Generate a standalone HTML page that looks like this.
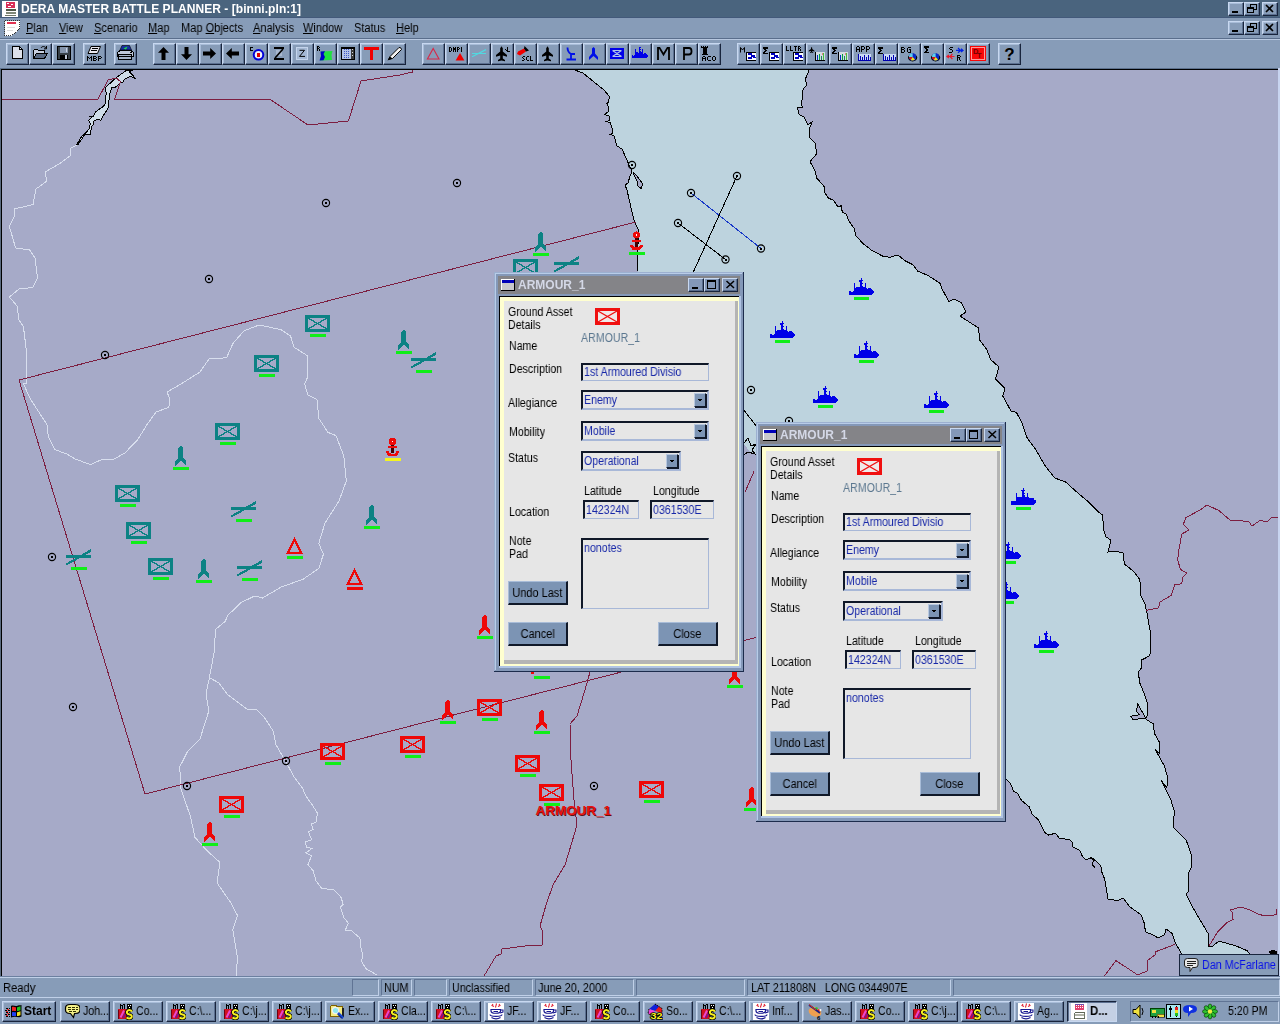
<!DOCTYPE html><html><head><meta charset="utf-8"><title>DERA MASTER BATTLE PLANNER</title><style>
html,body{margin:0;padding:0}
body{width:1280px;height:1024px;overflow:hidden;position:relative;background:#879cb8;font-family:"Liberation Sans",sans-serif;font-size:12px;color:#000}
div{box-sizing:border-box}
.rb{background:#879cb8;border:1px solid;border-color:#c8d8f0 #18243c #18243c #c8d8f0;box-shadow:inset -1px -1px 0 #5c7090,inset 1px 1px 0 #a8bcd8}
.rb2{background:#8498b8;border:1px solid;border-color:#c8d8f0 #18243c #18243c #c8d8f0;box-shadow:inset -1px -1px 0 #586c8c}
.pb{border:1px solid;border-color:#18243c #c8d8f0 #c8d8f0 #18243c;box-shadow:inset 1px 1px 0 #5c7090}
.sk{border:1px solid;border-color:#607494 #c0d0e8 #c0d0e8 #607494}
.fld{background:#e6e6e6;border:2px solid;border-color:#101828 #a8b8d8 #a8b8d8 #101828;border-right-width:1px;border-bottom-width:1px;overflow:hidden}
.cmb{background:#e6e6e6;border:2px solid;border-color:#101828 #a8b8d8 #a8b8d8 #101828;overflow:hidden}
.cb{background:#7c94b4;border:1px solid;border-color:#b8c8e0 #101828 #101828 #b8c8e0;box-shadow:1px 1px 0 #101828}
.pbn{background:#7c94b4;border:1px solid;border-color:#a8bcd8 #101828 #101828 #a8bcd8;border-bottom-width:2px;border-right-width:2px}
</style></head><body><svg width="1280" height="1024" viewBox="0 0 1280 1024" style="position:absolute;left:0;top:0" shape-rendering="crispEdges"><defs><g id="box"><rect x="1.5" y="1.5" width="22" height="14" fill="none" stroke="currentColor" stroke-width="3"/><path d="M3 3L22 14M22 3L3 14" stroke="currentColor" stroke-width="1.4" fill="none"/></g><g id="rkt"><path d="M0 0L2.5 2.5V12.5L5.5 15.5V20.5L0 15L-5.5 20.5V15.5L-2.5 12.5V2.5Z" fill="currentColor"/></g><g id="xl"><rect x="0" y="6" width="25" height="3" fill="currentColor"/><path d="M0 14.5L25 0V3L0.6 16.5Z" fill="currentColor"/></g><g id="ship"><path d="M0 -4L1 -4L2 -3L5 -4V-12H6V-7L7 -8H9L10 -7L11.5 -9L11 -12L10 -15H12V-17H13V-15L14 -14H13V-12L14 -11H13L14 -8H16V-12H17V-8L18 -6L19 -7H22L23 -5L25 -4V-2.5L23 0H0Z" fill="currentColor"/></g><g id="tri"><path d="M0 1.5L6.5 14.5H-6.5Z" fill="none" stroke="currentColor" stroke-width="2"/></g><g id="anc"><circle cx="0" cy="4" r="3.600" fill="currentColor"/><rect x="-0.800" y="3.200" width="1.600" height="1.600" fill="#fff"/><rect x="-1.500" y="7.300" width="3" height="8.500" fill="#400"/><rect x="-4.500" y="8.500" width="9" height="2.400" fill="currentColor"/><path d="M-6.500 13.500V15L-4 18.500H4L6.500 15V13.500H3.500V15L2 16H-2L-3.500 15V13.500Z" fill="currentColor"/></g></defs><rect x="0" y="68" width="1280" height="910" fill="#a6aac8"/><g shape-rendering="crispEdges"><polygon points="572.0,69.0 583.0,73.0 594.0,82.0 604.0,90.0 610.0,97.0 608.3,100.0 609.0,102.7 606.5,103.2 608.0,106.0 608.0,112.0 604.5,114.5 609.0,116.0 609.5,120.5 606.5,121.5 610.5,123.0 612.0,128.0 613.0,133.0 610.5,134.5 614.0,136.0 617.0,146.0 622.0,149.0 626.0,158.0 631.0,169.0 632.0,172.0 630.0,176.0 628.0,183.0 625.0,185.0 627.0,190.0 629.0,199.0 632.0,212.0 634.5,222.0 638.0,229.0 639.0,236.0 637.0,253.0 637.0,262.0 638.0,271.0 645.0,290.0 660.0,320.0 690.0,365.0 720.0,410.0 744.0,444.0 750.0,452.0 757.0,455.0 800.0,520.0 850.0,600.0 920.0,690.0 980.0,755.0 1005.8,778.8 1010.5,783.4 1013.4,791.0 1017.5,793.4 1021.6,800.4 1029.3,806.9 1032.2,814.5 1038.6,819.8 1045.0,832.7 1048.6,835.0 1055.6,833.2 1059.0,838.0 1069.7,839.7 1072.6,842.6 1072.6,846.7 1079.7,850.2 1082.0,855.5 1086.0,860.2 1091.4,857.3 1095.5,860.8 1100.7,865.5 1102.0,872.5 1104.8,879.5 1105.6,885.0 1108.0,899.0 1117.5,900.6 1123.0,898.0 1130.0,907.0 1141.0,914.7 1144.0,922.5 1145.6,932.0 1153.4,935.0 1158.0,938.0 1164.4,935.0 1166.0,928.8 1172.0,933.4 1175.3,942.8 1181.5,953.8 1184.0,960.0 1250.0,960.0 1250.0,954.0 1247.0,950.6 1236.0,946.0 1219.0,941.0 1212.8,946.0 1208.8,946.0 1209.0,935.0 1203.4,925.6 1192.5,907.0 1186.0,894.0 1188.8,891.0 1188.8,872.5 1192.0,866.0 1191.0,853.8 1186.0,839.7 1173.0,827.0 1174.4,811.5 1170.6,799.0 1161.0,780.0 1166.9,788.0 1167.5,777.0 1164.4,766.0 1155.0,749.0 1159.7,753.8 1159.7,742.8 1154.4,733.4 1153.4,724.0 1145.0,718.5 1133.0,719.4 1130.6,716.3 1139.4,714.7 1136.3,711.5 1137.8,703.8 1145.6,718.0 1147.0,716.0 1148.0,705.0 1144.0,693.0 1139.4,682.0 1138.5,671.5 1141.6,668.0 1142.0,659.8 1149.8,655.7 1151.0,646.0 1150.4,632.4 1147.0,613.3 1145.0,603.7 1140.0,594.0 1140.8,586.0 1139.5,579.0 1134.0,571.7 1124.4,564.0 1123.0,553.0 1114.8,551.0 1108.0,552.0 1111.0,540.0 1106.0,537.0 1104.0,531.0 1102.5,515.0 1098.4,512.0 1087.5,501.0 1079.0,494.0 1065.6,482.0 1054.7,478.0 1045.0,465.6 1035.5,449.0 1027.3,438.3 1021.9,423.0 1016.4,412.3 1011.0,411.0 1002.7,396.0 1005.0,388.7 995.5,379.0 999.0,367.0 990.6,359.6 987.0,350.0 979.7,340.0 978.5,328.0 960.0,316.0 966.0,312.0 961.5,302.7 954.0,299.0 949.0,301.5 942.0,289.0 939.8,283.0 928.0,275.5 917.5,271.0 913.0,264.8 904.6,260.5 898.0,255.0 889.5,257.3 883.0,256.2 872.3,250.8 862.7,243.3 856.0,235.8 854.0,228.3 848.7,220.8 846.6,214.3 842.3,212.2 841.2,205.7 838.0,207.0 833.7,200.4 828.3,198.0 825.0,193.0 824.0,186.4 816.5,177.8 815.4,171.4 810.0,161.7 816.5,154.0 815.4,143.5 810.0,138.0 809.6,128.4 812.0,122.0 808.0,125.0 803.6,116.6 799.3,114.5 797.2,107.6 802.5,108.0 801.5,104.8 803.2,88.7 806.2,85.5 805.8,78.0 809.6,69.0" fill="#bdd3de"/><polyline points="572.0,69.0 583.0,73.0 594.0,82.0 604.0,90.0 610.0,97.0 608.3,100.0 609.0,102.7 606.5,103.2 608.0,106.0 608.0,112.0 604.5,114.5 609.0,116.0 609.5,120.5 606.5,121.5 610.5,123.0 612.0,128.0 613.0,133.0 610.5,134.5 614.0,136.0 617.0,146.0 622.0,149.0 626.0,158.0 631.0,169.0 632.0,172.0 630.0,176.0 628.0,183.0 625.0,185.0 627.0,190.0 629.0,199.0 632.0,212.0 634.5,222.0 638.0,229.0 639.0,236.0 637.0,253.0 637.0,262.0 638.0,271.0" fill="none" stroke="#000" stroke-width="1"/><polyline points="1005.8,778.8 1010.5,783.4 1013.4,791.0 1017.5,793.4 1021.6,800.4 1029.3,806.9 1032.2,814.5 1038.6,819.8 1045.0,832.7 1048.6,835.0 1055.6,833.2 1059.0,838.0 1069.7,839.7 1072.6,842.6 1072.6,846.7 1079.7,850.2 1082.0,855.5 1086.0,860.2 1091.4,857.3 1095.5,860.8 1100.7,865.5 1102.0,872.5 1104.8,879.5 1105.6,885.0 1108.0,899.0 1117.5,900.6 1123.0,898.0 1130.0,907.0 1141.0,914.7 1144.0,922.5 1145.6,932.0 1153.4,935.0 1158.0,938.0 1164.4,935.0 1166.0,928.8 1172.0,933.4 1175.3,942.8 1181.5,953.8 1184.0,960.0" fill="none" stroke="#000" stroke-width="1"/><polyline points="809.6,69.0 805.8,78.0 806.2,85.5 803.2,88.7 801.5,104.8 802.5,108.0 797.2,107.6 799.3,114.5 803.6,116.6 808.0,125.0 812.0,122.0 809.6,128.4 810.0,138.0 815.4,143.5 816.5,154.0 810.0,161.7 815.4,171.4 816.5,177.8 824.0,186.4 825.0,193.0 828.3,198.0 833.7,200.4 838.0,207.0 841.2,205.7 842.3,212.2 846.6,214.3 848.7,220.8 854.0,228.3 856.0,235.8 862.7,243.3 872.3,250.8 883.0,256.2 889.5,257.3 898.0,255.0 904.6,260.5 913.0,264.8 917.5,271.0 928.0,275.5 939.8,283.0 942.0,289.0 949.0,301.5 954.0,299.0 961.5,302.7 966.0,312.0 960.0,316.0 978.5,328.0 979.7,340.0 987.0,350.0 990.6,359.6 999.0,367.0 995.5,379.0 1005.0,388.7 1002.7,396.0 1011.0,411.0 1016.4,412.3 1021.9,423.0 1027.3,438.3 1035.5,449.0 1045.0,465.6 1054.7,478.0 1065.6,482.0 1079.0,494.0 1087.5,501.0 1098.4,512.0 1102.5,515.0 1104.0,531.0 1106.0,537.0 1111.0,540.0 1108.0,552.0 1114.8,551.0 1123.0,553.0 1124.4,564.0 1134.0,571.7 1139.5,579.0 1140.8,586.0 1140.0,594.0 1145.0,603.7 1147.0,613.3 1150.4,632.4 1151.0,646.0 1149.8,655.7 1142.0,659.8 1141.6,668.0 1138.5,671.5 1139.4,682.0 1144.0,693.0 1148.0,705.0 1147.0,716.0 1145.6,718.0 1137.8,703.8 1136.3,711.5 1139.4,714.7 1130.6,716.3 1133.0,719.4 1145.0,718.5 1153.4,724.0 1154.4,733.4 1159.7,742.8 1159.7,753.8 1155.0,749.0 1164.4,766.0 1167.5,777.0 1166.9,788.0 1161.0,780.0 1170.6,799.0 1174.4,811.5 1173.0,827.0 1186.0,839.7 1191.0,853.8 1192.0,866.0 1188.8,872.5 1188.8,891.0 1186.0,894.0 1192.5,907.0 1203.4,925.6 1209.0,935.0 1208.8,946.0 1212.8,946.0 1219.0,941.0 1236.0,946.0 1247.0,950.6 1250.0,954.0 1250.0,960.0" fill="none" stroke="#000" stroke-width="1"/><polygon points="633.0,172.0 637.0,176.0 643.0,184.0 641.0,188.5 638.0,186.0 637.0,181.0 634.0,175.0" fill="#a6aac8" stroke="#000" stroke-width="1"/><polyline points="743,409 757,427" fill="none" stroke="#000" stroke-width="1"/><polyline points="744,443 748,438 751,446 756,444 752,450 755,454 748,452 744,455" fill="none" stroke="#000" stroke-width="1"/><polyline points="1090,858 1094,860 1092,864 1095,868" fill="none" stroke="#000" stroke-width="1"/><polygon points="1268,952 1272,950 1277,951 1277,954 1270,954" fill="#000"/><polygon points="126.8,70.2 116.2,77.6 105.7,87.3 106.1,93.0 105.7,102.7 103.5,106.2 96.0,111.5 93.0,116.7 90.3,116.7 91.6,117.6 88.6,120.2 90.3,123.8 89.0,129.0 86.4,132.5 83.3,134.3 80.7,137.8 76.7,144.8 78.0,144.4 81.5,139.6 84.2,135.2 85.5,134.3 90.8,134.3 90.8,130.8 92.1,125.5 93.8,124.6 93.8,121.1 97.8,119.4 100.9,120.2 103.1,115.8 106.6,110.6 108.3,107.1 108.8,100.9 109.7,97.4 110.1,92.1 111.8,87.7 115.4,87.3 120.6,82.5 123.3,82.0 124.1,79.4 129.4,76.7 132.9,77.2 135.6,78.5 131.6,74.1 129.4,71.9 133.0,70.3" fill="#cfdde8" stroke="#000" stroke-width="1"/><polyline points="76.5,145.0 71.0,148.0 70.0,156.0 59.0,164.0 45.0,172.0 47.0,181.0 36.0,189.0 33.0,204.6 14.0,209.0 14.0,217.0 9.4,226.5 15.6,248.0 29.7,250.0 35.0,258.0 37.5,278.0 33.0,287.4 19.0,289.0 9.4,297.0 17.0,306.0 19.0,320.0 23.4,326.5 26.5,351.5 26.5,383.0 23.4,384.0 31.0,400.0 47.0,424.6 48.4,437.0 54.7,449.6 67.0,454.0 75.0,459.0 90.6,464.6 103.0,459.0 112.5,460.0 125.0,452.8 137.5,440.0 147.0,424.6 156.0,412.0 168.8,407.4 170.0,399.6 167.0,392.0 181.0,384.0 200.0,372.0 209.0,359.0 226.5,357.8 232.8,343.7 243.8,331.0 259.0,325.0 281.0,329.6 290.6,336.0 293.8,347.0 307.8,356.0 307.8,376.5 304.7,384.0 307.8,395.0 317.0,399.6 318.8,418.4 328.0,432.4 336.0,435.6 343.8,456.0 346.3,481.0 339.0,501.0 325.0,523.0 318.8,543.4 323.4,554.3 318.8,568.4 303.0,579.3 281.3,587.0 262.5,598.0 254.7,596.0 240.6,602.8 228.0,615.3 225.0,621.5 215.6,629.3 214.0,652.8 209.4,677.8 206.0,693.7 208.8,711.0 200.0,739.0 187.5,751.5 179.7,767.0 181.0,789.0 190.6,817.0 195.0,837.4 207.8,851.5 220.0,862.4 217.0,882.8 231.0,903.0 237.5,915.5 232.8,929.6 237.5,957.8 236.0,976.5" fill="none" stroke="#d8deee" stroke-width="1"/><polyline points="209.4,677.8 218.8,682.8 228.0,695.0 247.0,709.0 257.3,710.0 264.7,718.0 273.4,731.3 275.8,744.5 285.2,760.6 294.0,776.7 302.7,788.4 305.7,795.8 313.0,806.0 317.4,813.3 316.0,822.0 311.5,824.0 313.0,829.5 308.6,831.8 311.5,839.7 305.7,841.8 306.3,847.0 312.1,848.5 305.7,852.9 311.5,855.8 308.0,864.6 313.0,870.5 316.0,880.7 321.8,888.6 333.5,889.5 340.8,896.8 343.2,904.2 340.3,907.1 343.8,917.4 348.2,923.2 345.2,930.5 351.1,930.5 359.9,937.9 360.8,946.7 362.8,955.5 361.4,961.3 365.8,968.6 377.5,975.4" fill="none" stroke="#d8deee" stroke-width="1"/><polyline points="1.5,99.3 97.8,99.3 108.3,79.8 116.2,78.0 120.6,81.6 114.5,99.3 270.0,99.3 308.0,125.0 348.4,121.0 361.0,81.0 400.0,75.0 412.5,72.0 412.5,69.0" fill="none" stroke="#7c1e40" stroke-width="1"/><polyline points="636.0,222.0 19.0,380.0 145.0,794.0 762.0,636.0" fill="none" stroke="#7c1e40" stroke-width="1"/><polyline points="1146.0,610.5 1158.6,607.8 1160.0,602.0 1171.0,595.5 1175.0,584.6 1181.8,583.8 1182.7,577.7 1186.8,572.8 1180.5,569.5 1177.7,560.0 1179.0,549.0 1181.8,534.0 1189.2,530.0 1183.2,524.4 1186.0,517.6 1200.0,510.0 1207.0,505.0 1219.0,510.6 1230.0,520.0 1248.7,521.5 1252.0,526.0 1259.7,520.6 1267.5,521.5 1272.0,517.0 1278.0,518.0" fill="none" stroke="#7c1e40" stroke-width="1"/><polyline points="1209.0,946.0 1217.5,932.0 1227.0,922.5 1233.0,919.4 1232.5,912.5 1230.0,910.0 1241.0,907.0 1250.0,910.0 1259.7,914.7 1267.5,916.0 1276.0,914.7 1277.0,909.0" fill="none" stroke="#7c1e40" stroke-width="1"/><polyline points="1175.0,944.4 1155.0,952.0 1155.0,955.0 1148.0,960.0 1147.0,971.0 1137.8,975.0 1116.0,960.6 1104.4,976.0" fill="none" stroke="#7c1e40" stroke-width="1"/><polyline points="745.0,492.0 754.0,471.5" fill="none" stroke="#7c1e40" stroke-width="1"/><polyline points="590.0,672.0 585.0,690.0 577.0,716.0 570.0,724.0 571.0,760.0 574.0,800.0 577.0,825.0 572.0,842.0 565.0,865.0 553.0,885.0 546.0,905.0 540.0,926.0 543.0,932.0 542.0,945.0 525.0,946.0 502.0,949.0 501.0,954.0 496.0,956.0 484.0,976.0" fill="none" stroke="#7c1e40" stroke-width="1"/><line x1="691" y1="193" x2="761" y2="248.5" stroke="#1838c8" stroke-width="1"/><line x1="678" y1="223" x2="725.5" y2="259.5" stroke="#000" stroke-width="1"/><line x1="737" y1="176" x2="692" y2="275" stroke="#000" stroke-width="1"/><circle cx="326" cy="203" r="3.6" fill="none" stroke="#000" stroke-width="1.15" shape-rendering="auto"/><rect x="325" y="202" width="2" height="2" fill="#000"/><circle cx="457" cy="183" r="3.6" fill="none" stroke="#000" stroke-width="1.15" shape-rendering="auto"/><rect x="456" y="182" width="2" height="2" fill="#000"/><circle cx="209" cy="279" r="3.6" fill="none" stroke="#000" stroke-width="1.15" shape-rendering="auto"/><rect x="208" y="278" width="2" height="2" fill="#000"/><circle cx="105" cy="355" r="3.6" fill="none" stroke="#000" stroke-width="1.15" shape-rendering="auto"/><rect x="104" y="354" width="2" height="2" fill="#000"/><circle cx="52" cy="557" r="3.6" fill="none" stroke="#000" stroke-width="1.15" shape-rendering="auto"/><rect x="51" y="556" width="2" height="2" fill="#000"/><circle cx="73" cy="707" r="3.6" fill="none" stroke="#000" stroke-width="1.15" shape-rendering="auto"/><rect x="72" y="706" width="2" height="2" fill="#000"/><circle cx="187" cy="786" r="3.6" fill="none" stroke="#000" stroke-width="1.15" shape-rendering="auto"/><rect x="186" y="785" width="2" height="2" fill="#000"/><circle cx="286" cy="761" r="3.6" fill="none" stroke="#000" stroke-width="1.15" shape-rendering="auto"/><rect x="285" y="760" width="2" height="2" fill="#000"/><circle cx="594" cy="786" r="3.6" fill="none" stroke="#000" stroke-width="1.15" shape-rendering="auto"/><rect x="593" y="785" width="2" height="2" fill="#000"/><circle cx="632" cy="165" r="3.6" fill="none" stroke="#000" stroke-width="1.15" shape-rendering="auto"/><rect x="631" y="164" width="2" height="2" fill="#000"/><circle cx="737" cy="176" r="3.6" fill="none" stroke="#000" stroke-width="1.15" shape-rendering="auto"/><rect x="736" y="175" width="2" height="2" fill="#000"/><circle cx="691" cy="193" r="3.6" fill="none" stroke="#000" stroke-width="1.15" shape-rendering="auto"/><rect x="690" y="192" width="2" height="2" fill="#000"/><circle cx="678" cy="223" r="3.6" fill="none" stroke="#000" stroke-width="1.15" shape-rendering="auto"/><rect x="677" y="222" width="2" height="2" fill="#000"/><circle cx="761" cy="248.5" r="3.6" fill="none" stroke="#000" stroke-width="1.15" shape-rendering="auto"/><rect x="760" y="247.5" width="2" height="2" fill="#000"/><circle cx="725.5" cy="259.5" r="3.6" fill="none" stroke="#000" stroke-width="1.15" shape-rendering="auto"/><rect x="724.5" y="258.5" width="2" height="2" fill="#000"/><circle cx="751" cy="390" r="3.6" fill="none" stroke="#000" stroke-width="1.15" shape-rendering="auto"/><rect x="750" y="389" width="2" height="2" fill="#000"/><circle cx="789" cy="421" r="3.6" fill="none" stroke="#000" stroke-width="1.15" shape-rendering="auto"/><rect x="788" y="420" width="2" height="2" fill="#000"/></g><use href="#box" x="305" y="315" color="#0c8284"/><rect x="309.5" y="334" width="16" height="3" fill="#10ee18"/><use href="#box" x="254" y="355" color="#0c8284"/><rect x="258.5" y="374" width="16" height="3" fill="#10ee18"/><use href="#box" x="215" y="423" color="#0c8284"/><rect x="219.5" y="442" width="16" height="3" fill="#10ee18"/><use href="#box" x="115" y="485" color="#0c8284"/><rect x="119.5" y="504" width="16" height="3" fill="#10ee18"/><use href="#box" x="126" y="522" color="#0c8284"/><rect x="130.5" y="541" width="16" height="3" fill="#10ee18"/><use href="#box" x="148" y="558" color="#0c8284"/><rect x="152.5" y="577" width="16" height="3" fill="#10ee18"/><use href="#box" x="513" y="259" color="#0c8284"/><rect x="517.5" y="278" width="16" height="3" fill="#10ee18"/><use href="#box" x="477" y="699" color="#ee0808"/><rect x="481.5" y="718" width="16" height="3" fill="#10ee18"/><use href="#box" x="320" y="743" color="#ee0808"/><rect x="324.5" y="762" width="16" height="3" fill="#10ee18"/><use href="#box" x="400" y="736" color="#ee0808"/><rect x="404.5" y="755" width="16" height="3" fill="#10ee18"/><use href="#box" x="515" y="755" color="#ee0808"/><rect x="519.5" y="774" width="16" height="3" fill="#10ee18"/><use href="#box" x="539" y="784" color="#ee0808"/><rect x="543.5" y="803" width="16" height="3" fill="#10ee18"/><use href="#box" x="639" y="781" color="#ee0808"/><rect x="643.5" y="800" width="16" height="3" fill="#10ee18"/><use href="#box" x="219" y="796" color="#ee0808"/><rect x="223.5" y="815" width="16" height="3" fill="#10ee18"/><use href="#rkt" x="403.5" y="329.5" color="#0c8284"/><rect x="396" y="350.5" width="16" height="3" fill="#10ee18"/><use href="#rkt" x="180.5" y="445.5" color="#0c8284"/><rect x="173" y="466.5" width="16" height="3" fill="#10ee18"/><use href="#rkt" x="371.5" y="504.5" color="#0c8284"/><rect x="364" y="525.5" width="16" height="3" fill="#10ee18"/><use href="#rkt" x="203.5" y="558.5" color="#0c8284"/><rect x="196" y="579.5" width="16" height="3" fill="#10ee18"/><use href="#rkt" x="540.5" y="231.5" color="#0c8284"/><rect x="533" y="252.5" width="16" height="3" fill="#10ee18"/><use href="#rkt" x="484.5" y="614.5" color="#ee0808"/><rect x="477" y="635.5" width="16" height="3" fill="#10ee18"/><use href="#rkt" x="447.5" y="699.5" color="#ee0808"/><rect x="440" y="720.5" width="16" height="3" fill="#10ee18"/><use href="#rkt" x="541.5" y="709.5" color="#ee0808"/><rect x="534" y="730.5" width="16" height="3" fill="#10ee18"/><use href="#rkt" x="209.5" y="821.5" color="#ee0808"/><rect x="202" y="842.5" width="16" height="3" fill="#10ee18"/><use href="#rkt" x="751.5" y="786.5" color="#ee0808"/><rect x="744" y="807.5" width="16" height="3" fill="#10ee18"/><use href="#rkt" x="734" y="664" color="#ee0808"/><rect x="726.5" y="685" width="16" height="3" fill="#10ee18"/><use href="#xl" x="411" y="352" color="#0c8284"/><rect x="416" y="370" width="16" height="3" fill="#10ee18"/><use href="#xl" x="231" y="501" color="#0c8284"/><rect x="236" y="519" width="16" height="3" fill="#10ee18"/><use href="#xl" x="66" y="549" color="#0c8284"/><rect x="71" y="567" width="16" height="3" fill="#10ee18"/><use href="#xl" x="237" y="560" color="#0c8284"/><rect x="242" y="578" width="16" height="3" fill="#10ee18"/><use href="#xl" x="554" y="256" color="#0c8284"/><rect x="559" y="274" width="16" height="3" fill="#10ee18"/><use href="#ship" x="849" y="295" color="#0000e8"/><rect x="854" y="297" width="15" height="3" fill="#10ee18"/><use href="#ship" x="770" y="338" color="#0000e8"/><rect x="775" y="340" width="15" height="3" fill="#10ee18"/><use href="#ship" x="854" y="358" color="#0000e8"/><rect x="859" y="360" width="15" height="3" fill="#10ee18"/><use href="#ship" x="813" y="403" color="#0000e8"/><rect x="818" y="405" width="15" height="3" fill="#10ee18"/><use href="#ship" x="924" y="408" color="#0000e8"/><rect x="929" y="410" width="15" height="3" fill="#10ee18"/><use href="#ship" x="1011" y="504.5" color="#0000e8"/><rect x="1016" y="506.5" width="15" height="3" fill="#10ee18"/><use href="#ship" x="996" y="559" color="#0000e8"/><rect x="1001" y="561" width="15" height="3" fill="#10ee18"/><use href="#ship" x="994" y="599" color="#0000e8"/><rect x="999" y="601" width="15" height="3" fill="#10ee18"/><use href="#ship" x="1034" y="648" color="#0000e8"/><rect x="1039" y="650" width="15" height="3" fill="#10ee18"/><rect x="534" y="676" width="16" height="3" fill="#10ee18"/><rect x="531" y="672" width="3" height="2" fill="#ee0808"/><use href="#tri" x="294.5" y="538" color="#ee0808"/><rect x="287" y="556" width="16" height="3" fill="#10ee18"/><use href="#tri" x="354.5" y="569" color="#ee0808"/><rect x="347" y="587" width="16" height="3" fill="#ee0808"/><use href="#anc" x="392.5" y="437.5" color="#ee0808"/><rect x="384.5" y="458" width="16" height="3" fill="#f4f420"/><use href="#anc" x="636.5" y="231" color="#ee0808"/><rect x="628.5" y="251.5" width="16" height="3" fill="#10ee18"/><text x="536.5" y="816" font-family="Liberation Sans" font-weight="bold" font-size="13.5" textLength="75.5" lengthAdjust="spacingAndGlyphs" fill="#601010">ARMOUR_1</text><text x="535.5" y="815" font-family="Liberation Sans" font-weight="bold" font-size="13.5" textLength="75.5" lengthAdjust="spacingAndGlyphs" fill="#e81010">ARMOUR_1</text></svg><div class="" style="position:absolute;left:0px;top:68px;width:1280px;height:1px;background:#5c708c"></div><div class="" style="position:absolute;left:0px;top:69px;width:1280px;height:1px;background:#000"></div><div class="" style="position:absolute;left:0px;top:69px;width:1px;height:907px;background:#5c6c80"></div><div class="" style="position:absolute;left:1px;top:69px;width:1px;height:907px;background:#000"></div><div class="" style="position:absolute;left:1278px;top:68px;width:2px;height:909px;background:#c8d4f0"></div><div class="" style="position:absolute;left:1179px;top:954px;width:100px;height:22px;background:#879cb8;border:1px solid #18243c"></div><svg style="position:absolute;left:1183px;top:957px" width="17" height="17" viewBox="0 0 17 17" shape-rendering="crispEdges" ><path d="M1.500 4Q1.500 1.500 4.500 1.500H12Q15 1.500 15 4V8Q15 10.500 12 10.500H9.500L7 14.500V10.500H4.500Q1.500 10.500 1.500 8Z" fill="#e8e8e8" stroke="#202020" shape-rendering="auto"/><path d="M4 4.500H12.500M4 6.500H12.500M4 8.500H10" stroke="#202020"/></svg><div style="position:absolute;left:1202px;top:958px;font-size:12px;line-height:14px;color:#0810e8;white-space:pre;will-change:transform;transform:scaleX(0.9);transform-origin:0 0;">Dan McFarlane</div><div style="position:absolute;left:494px;top:272px;width:250px;height:400px"><div class="" style="position:absolute;left:0px;top:0px;width:250px;height:400px;background:#1c2c4c"></div><div class="" style="position:absolute;left:0px;top:0px;width:249px;height:399px;background:#8498b8"></div><div class="" style="position:absolute;left:0px;top:0px;width:249px;height:1px;background:#9cb0d0"></div><div class="" style="position:absolute;left:0px;top:0px;width:1px;height:399px;background:#9cb0d0"></div><div class="" style="position:absolute;left:1px;top:1px;width:247px;height:1px;background:#b8cce8"></div><div class="" style="position:absolute;left:1px;top:1px;width:1px;height:397px;background:#b8cce8"></div><div style="position:absolute;left:0;top:1px;width:250px;height:399px"><div class="" style="position:absolute;left:4px;top:3px;width:242px;height:18px;background:#848488"></div><svg style="position:absolute;left:7px;top:6px" width="14" height="12" viewBox="0 0 14 12" shape-rendering="crispEdges" ><rect x="0" y="0" width="14" height="12" fill="#000"/><rect x="0" y="0" width="13" height="11" fill="#fff"/><rect x="1" y="1" width="12" height="10" fill="#c8c8cc"/><rect x="1" y="1" width="12" height="3" fill="#0000b8"/></svg><div style="position:absolute;left:24px;top:5px;font-size:12px;line-height:14px;color:#d4d8e6;white-space:pre;will-change:transform;font-weight:bold;">ARMOUR_1</div><div class="rb2" style="position:absolute;left:194px;top:5px;width:16px;height:14px;"></div><svg style="position:absolute;left:194px;top:5px" width="16" height="14" viewBox="0 0 16 14" shape-rendering="crispEdges" ><rect x="4" y="9" width="6" height="2" fill="#000"/></svg><div class="rb2" style="position:absolute;left:210px;top:5px;width:16px;height:14px;"></div><svg style="position:absolute;left:210px;top:5px" width="16" height="14" viewBox="0 0 16 14" shape-rendering="crispEdges" ><rect x="3.500" y="2.500" width="8" height="8" fill="none" stroke="#000"/><rect x="3" y="2" width="9" height="2" fill="#000"/></svg><div class="rb2" style="position:absolute;left:228px;top:5px;width:16px;height:14px;"></div><svg style="position:absolute;left:228px;top:5px" width="16" height="14" viewBox="0 0 16 14" shape-rendering="crispEdges" ><path d="M4.500 3L12 10M12 3L4.500 10" stroke="#000" stroke-width="1.500" fill="none" shape-rendering="auto"/></svg><div class="" style="position:absolute;left:5px;top:23px;width:242px;height:372px;background:#b0c4e4"></div><div class="" style="position:absolute;left:5px;top:23px;width:240px;height:370px;background:#000"></div><div class="" style="position:absolute;left:6px;top:24px;width:239px;height:369px;background:#ffffd0"></div><div class="" style="position:absolute;left:10px;top:28px;width:234px;height:363px;background:#b4b4b4"></div><div class="" style="position:absolute;left:10px;top:28px;width:231px;height:359px;background:#e6e6e6"></div><div style="position:absolute;left:14px;top:32px;font-size:12px;line-height:14px;color:#000;white-space:pre;will-change:transform;transform:scaleX(0.885);transform-origin:0 0;">Ground Asset</div><div style="position:absolute;left:14px;top:45px;font-size:12px;line-height:14px;color:#000;white-space:pre;will-change:transform;transform:scaleX(0.885);transform-origin:0 0;">Details</div><svg style="position:absolute;left:101px;top:35px" width="25" height="17" viewBox="0 0 25 17" shape-rendering="crispEdges" ><rect x="1.500" y="1.500" width="22" height="14" fill="#f0e8e8" stroke="#f01010" stroke-width="3"/><path d="M3 3L22 14M22 3L3 14" stroke="#f01010" stroke-width="1.400" fill="none" shape-rendering="auto"/></svg><div style="position:absolute;left:87px;top:58px;font-size:12px;line-height:14px;color:#5c7890;white-space:pre;will-change:transform;transform:scaleX(0.885);transform-origin:0 0;">ARMOUR_1</div><div style="position:absolute;left:15px;top:66px;font-size:12px;line-height:14px;color:#000;white-space:pre;will-change:transform;transform:scaleX(0.885);transform-origin:0 0;">Name</div><div style="position:absolute;left:15px;top:89px;font-size:12px;line-height:14px;color:#000;white-space:pre;will-change:transform;transform:scaleX(0.885);transform-origin:0 0;">Description</div><div class="fld" style="position:absolute;left:87px;top:90px;width:128px;height:18px;"><div style="position:absolute;left:1px;top:-0.5px;font-size:12px;line-height:14px;color:#1828a8;white-space:pre;will-change:transform;transform:scaleX(0.885);transform-origin:0 0;">1st Armoured Divisio</div></div><div style="position:absolute;left:14px;top:123px;font-size:12px;line-height:14px;color:#000;white-space:pre;will-change:transform;transform:scaleX(0.885);transform-origin:0 0;">Allegiance</div><div class="cmb" style="position:absolute;left:87px;top:117px;width:128px;height:20px;"><div style="position:absolute;left:1px;top:1px;font-size:12px;line-height:14px;color:#1828a8;white-space:pre;will-change:transform;transform:scaleX(0.885);transform-origin:0 0;">Enemy</div></div><div class="cb" style="position:absolute;left:200px;top:120px;width:12px;height:14px;"></div><svg style="position:absolute;left:200px;top:120px" width="12" height="14" viewBox="0 0 12 14" shape-rendering="crispEdges" ><path d="M3.500 6H8.500L6 9Z" fill="#000"/></svg><div style="position:absolute;left:15px;top:152px;font-size:12px;line-height:14px;color:#000;white-space:pre;will-change:transform;transform:scaleX(0.885);transform-origin:0 0;">Mobility</div><div class="cmb" style="position:absolute;left:87px;top:148px;width:128px;height:20px;"><div style="position:absolute;left:1px;top:1px;font-size:12px;line-height:14px;color:#1828a8;white-space:pre;will-change:transform;transform:scaleX(0.885);transform-origin:0 0;">Mobile</div></div><div class="cb" style="position:absolute;left:200px;top:151px;width:12px;height:14px;"></div><svg style="position:absolute;left:200px;top:151px" width="12" height="14" viewBox="0 0 12 14" shape-rendering="crispEdges" ><path d="M3.500 6H8.500L6 9Z" fill="#000"/></svg><div style="position:absolute;left:14px;top:178px;font-size:12px;line-height:14px;color:#000;white-space:pre;will-change:transform;transform:scaleX(0.885);transform-origin:0 0;">Status</div><div class="cmb" style="position:absolute;left:87px;top:178px;width:100px;height:20px;"><div style="position:absolute;left:1px;top:1px;font-size:12px;line-height:14px;color:#1828a8;white-space:pre;will-change:transform;transform:scaleX(0.885);transform-origin:0 0;">Operational</div></div><div class="cb" style="position:absolute;left:172px;top:181px;width:12px;height:14px;"></div><svg style="position:absolute;left:172px;top:181px" width="12" height="14" viewBox="0 0 12 14" shape-rendering="crispEdges" ><path d="M3.500 6H8.500L6 9Z" fill="#000"/></svg><div style="position:absolute;left:89.5px;top:211px;font-size:12px;line-height:14px;color:#000;white-space:pre;will-change:transform;transform:scaleX(0.885);transform-origin:0 0;">Latitude</div><div style="position:absolute;left:158.5px;top:211px;font-size:12px;line-height:14px;color:#000;white-space:pre;will-change:transform;transform:scaleX(0.885);transform-origin:0 0;">Longitude</div><div style="position:absolute;left:15px;top:232px;font-size:12px;line-height:14px;color:#000;white-space:pre;will-change:transform;transform:scaleX(0.885);transform-origin:0 0;">Location</div><div class="fld" style="position:absolute;left:89px;top:227px;width:56px;height:19px;"><div style="position:absolute;left:1px;top:0.5px;font-size:12px;line-height:14px;color:#1828a8;white-space:pre;will-change:transform;transform:scaleX(0.885);transform-origin:0 0;">142324N</div></div><div class="fld" style="position:absolute;left:156px;top:227px;width:64px;height:19px;"><div style="position:absolute;left:1px;top:0.5px;font-size:12px;line-height:14px;color:#1828a8;white-space:pre;will-change:transform;transform:scaleX(0.885);transform-origin:0 0;">0361530E</div></div><div style="position:absolute;left:15px;top:261px;font-size:12px;line-height:14px;color:#000;white-space:pre;will-change:transform;transform:scaleX(0.885);transform-origin:0 0;">Note</div><div style="position:absolute;left:15px;top:274px;font-size:12px;line-height:14px;color:#000;white-space:pre;will-change:transform;transform:scaleX(0.885);transform-origin:0 0;">Pad</div><div class="fld" style="position:absolute;left:87px;top:265px;width:128px;height:71px;"><div style="position:absolute;left:1px;top:1px;font-size:12px;line-height:14px;color:#1828a8;white-space:pre;will-change:transform;transform:scaleX(0.885);transform-origin:0 0;">nonotes</div></div><div class="pbn" style="position:absolute;left:14px;top:308px;width:60px;height:24px;text-align:center;"><span style="display:inline-block;font-size:12px;line-height:22px;transform:scaleX(0.915);will-change:transform">Undo Last</span></div><div class="pbn" style="position:absolute;left:14px;top:349px;width:60px;height:24px;text-align:center;"><span style="display:inline-block;font-size:12px;line-height:22px;transform:scaleX(0.915);will-change:transform">Cancel</span></div><div class="pbn" style="position:absolute;left:164px;top:349px;width:60px;height:24px;text-align:center;"><span style="display:inline-block;font-size:12px;line-height:22px;transform:scaleX(0.915);will-change:transform">Close</span></div></div></div><div style="position:absolute;left:756px;top:422px;width:250px;height:400px"><div class="" style="position:absolute;left:0px;top:0px;width:250px;height:400px;background:#1c2c4c"></div><div class="" style="position:absolute;left:0px;top:0px;width:249px;height:399px;background:#8498b8"></div><div class="" style="position:absolute;left:0px;top:0px;width:249px;height:1px;background:#9cb0d0"></div><div class="" style="position:absolute;left:0px;top:0px;width:1px;height:399px;background:#9cb0d0"></div><div class="" style="position:absolute;left:1px;top:1px;width:247px;height:1px;background:#b8cce8"></div><div class="" style="position:absolute;left:1px;top:1px;width:1px;height:397px;background:#b8cce8"></div><div style="position:absolute;left:0;top:1px;width:250px;height:399px"><div class="" style="position:absolute;left:4px;top:3px;width:242px;height:18px;background:#848488"></div><svg style="position:absolute;left:7px;top:6px" width="14" height="12" viewBox="0 0 14 12" shape-rendering="crispEdges" ><rect x="0" y="0" width="14" height="12" fill="#000"/><rect x="0" y="0" width="13" height="11" fill="#fff"/><rect x="1" y="1" width="12" height="10" fill="#c8c8cc"/><rect x="1" y="1" width="12" height="3" fill="#0000b8"/></svg><div style="position:absolute;left:24px;top:5px;font-size:12px;line-height:14px;color:#d4d8e6;white-space:pre;will-change:transform;font-weight:bold;">ARMOUR_1</div><div class="rb2" style="position:absolute;left:194px;top:5px;width:16px;height:14px;"></div><svg style="position:absolute;left:194px;top:5px" width="16" height="14" viewBox="0 0 16 14" shape-rendering="crispEdges" ><rect x="4" y="9" width="6" height="2" fill="#000"/></svg><div class="rb2" style="position:absolute;left:210px;top:5px;width:16px;height:14px;"></div><svg style="position:absolute;left:210px;top:5px" width="16" height="14" viewBox="0 0 16 14" shape-rendering="crispEdges" ><rect x="3.500" y="2.500" width="8" height="8" fill="none" stroke="#000"/><rect x="3" y="2" width="9" height="2" fill="#000"/></svg><div class="rb2" style="position:absolute;left:228px;top:5px;width:16px;height:14px;"></div><svg style="position:absolute;left:228px;top:5px" width="16" height="14" viewBox="0 0 16 14" shape-rendering="crispEdges" ><path d="M4.500 3L12 10M12 3L4.500 10" stroke="#000" stroke-width="1.500" fill="none" shape-rendering="auto"/></svg><div class="" style="position:absolute;left:5px;top:23px;width:242px;height:372px;background:#b0c4e4"></div><div class="" style="position:absolute;left:5px;top:23px;width:240px;height:370px;background:#000"></div><div class="" style="position:absolute;left:6px;top:24px;width:239px;height:369px;background:#ffffd0"></div><div class="" style="position:absolute;left:10px;top:28px;width:234px;height:363px;background:#b4b4b4"></div><div class="" style="position:absolute;left:10px;top:28px;width:231px;height:359px;background:#e6e6e6"></div><div style="position:absolute;left:14px;top:32px;font-size:12px;line-height:14px;color:#000;white-space:pre;will-change:transform;transform:scaleX(0.885);transform-origin:0 0;">Ground Asset</div><div style="position:absolute;left:14px;top:45px;font-size:12px;line-height:14px;color:#000;white-space:pre;will-change:transform;transform:scaleX(0.885);transform-origin:0 0;">Details</div><svg style="position:absolute;left:101px;top:35px" width="25" height="17" viewBox="0 0 25 17" shape-rendering="crispEdges" ><rect x="1.500" y="1.500" width="22" height="14" fill="#f0e8e8" stroke="#f01010" stroke-width="3"/><path d="M3 3L22 14M22 3L3 14" stroke="#f01010" stroke-width="1.400" fill="none" shape-rendering="auto"/></svg><div style="position:absolute;left:87px;top:58px;font-size:12px;line-height:14px;color:#5c7890;white-space:pre;will-change:transform;transform:scaleX(0.885);transform-origin:0 0;">ARMOUR_1</div><div style="position:absolute;left:15px;top:66px;font-size:12px;line-height:14px;color:#000;white-space:pre;will-change:transform;transform:scaleX(0.885);transform-origin:0 0;">Name</div><div style="position:absolute;left:15px;top:89px;font-size:12px;line-height:14px;color:#000;white-space:pre;will-change:transform;transform:scaleX(0.885);transform-origin:0 0;">Description</div><div class="fld" style="position:absolute;left:87px;top:90px;width:128px;height:18px;"><div style="position:absolute;left:1px;top:-0.5px;font-size:12px;line-height:14px;color:#1828a8;white-space:pre;will-change:transform;transform:scaleX(0.885);transform-origin:0 0;">1st Armoured Divisio</div></div><div style="position:absolute;left:14px;top:123px;font-size:12px;line-height:14px;color:#000;white-space:pre;will-change:transform;transform:scaleX(0.885);transform-origin:0 0;">Allegiance</div><div class="cmb" style="position:absolute;left:87px;top:117px;width:128px;height:20px;"><div style="position:absolute;left:1px;top:1px;font-size:12px;line-height:14px;color:#1828a8;white-space:pre;will-change:transform;transform:scaleX(0.885);transform-origin:0 0;">Enemy</div></div><div class="cb" style="position:absolute;left:200px;top:120px;width:12px;height:14px;"></div><svg style="position:absolute;left:200px;top:120px" width="12" height="14" viewBox="0 0 12 14" shape-rendering="crispEdges" ><path d="M3.500 6H8.500L6 9Z" fill="#000"/></svg><div style="position:absolute;left:15px;top:152px;font-size:12px;line-height:14px;color:#000;white-space:pre;will-change:transform;transform:scaleX(0.885);transform-origin:0 0;">Mobility</div><div class="cmb" style="position:absolute;left:87px;top:148px;width:128px;height:20px;"><div style="position:absolute;left:1px;top:1px;font-size:12px;line-height:14px;color:#1828a8;white-space:pre;will-change:transform;transform:scaleX(0.885);transform-origin:0 0;">Mobile</div></div><div class="cb" style="position:absolute;left:200px;top:151px;width:12px;height:14px;"></div><svg style="position:absolute;left:200px;top:151px" width="12" height="14" viewBox="0 0 12 14" shape-rendering="crispEdges" ><path d="M3.500 6H8.500L6 9Z" fill="#000"/></svg><div style="position:absolute;left:14px;top:178px;font-size:12px;line-height:14px;color:#000;white-space:pre;will-change:transform;transform:scaleX(0.885);transform-origin:0 0;">Status</div><div class="cmb" style="position:absolute;left:87px;top:178px;width:100px;height:20px;"><div style="position:absolute;left:1px;top:1px;font-size:12px;line-height:14px;color:#1828a8;white-space:pre;will-change:transform;transform:scaleX(0.885);transform-origin:0 0;">Operational</div></div><div class="cb" style="position:absolute;left:172px;top:181px;width:12px;height:14px;"></div><svg style="position:absolute;left:172px;top:181px" width="12" height="14" viewBox="0 0 12 14" shape-rendering="crispEdges" ><path d="M3.500 6H8.500L6 9Z" fill="#000"/></svg><div style="position:absolute;left:89.5px;top:211px;font-size:12px;line-height:14px;color:#000;white-space:pre;will-change:transform;transform:scaleX(0.885);transform-origin:0 0;">Latitude</div><div style="position:absolute;left:158.5px;top:211px;font-size:12px;line-height:14px;color:#000;white-space:pre;will-change:transform;transform:scaleX(0.885);transform-origin:0 0;">Longitude</div><div style="position:absolute;left:15px;top:232px;font-size:12px;line-height:14px;color:#000;white-space:pre;will-change:transform;transform:scaleX(0.885);transform-origin:0 0;">Location</div><div class="fld" style="position:absolute;left:89px;top:227px;width:56px;height:19px;"><div style="position:absolute;left:1px;top:0.5px;font-size:12px;line-height:14px;color:#1828a8;white-space:pre;will-change:transform;transform:scaleX(0.885);transform-origin:0 0;">142324N</div></div><div class="fld" style="position:absolute;left:156px;top:227px;width:64px;height:19px;"><div style="position:absolute;left:1px;top:0.5px;font-size:12px;line-height:14px;color:#1828a8;white-space:pre;will-change:transform;transform:scaleX(0.885);transform-origin:0 0;">0361530E</div></div><div style="position:absolute;left:15px;top:261px;font-size:12px;line-height:14px;color:#000;white-space:pre;will-change:transform;transform:scaleX(0.885);transform-origin:0 0;">Note</div><div style="position:absolute;left:15px;top:274px;font-size:12px;line-height:14px;color:#000;white-space:pre;will-change:transform;transform:scaleX(0.885);transform-origin:0 0;">Pad</div><div class="fld" style="position:absolute;left:87px;top:265px;width:128px;height:71px;"><div style="position:absolute;left:1px;top:1px;font-size:12px;line-height:14px;color:#1828a8;white-space:pre;will-change:transform;transform:scaleX(0.885);transform-origin:0 0;">nonotes</div></div><div class="pbn" style="position:absolute;left:14px;top:308px;width:60px;height:24px;text-align:center;"><span style="display:inline-block;font-size:12px;line-height:22px;transform:scaleX(0.915);will-change:transform">Undo Last</span></div><div class="pbn" style="position:absolute;left:14px;top:349px;width:60px;height:24px;text-align:center;"><span style="display:inline-block;font-size:12px;line-height:22px;transform:scaleX(0.915);will-change:transform">Cancel</span></div><div class="pbn" style="position:absolute;left:164px;top:349px;width:60px;height:24px;text-align:center;"><span style="display:inline-block;font-size:12px;line-height:22px;transform:scaleX(0.915);will-change:transform">Close</span></div></div></div><div class="" style="position:absolute;left:0px;top:0px;width:1280px;height:18px;background:#4a647e"></div><svg style="position:absolute;left:2px;top:1px" width="16" height="16" viewBox="0 0 16 16" shape-rendering="crispEdges" ><rect x="0" y="0" width="16" height="16" fill="#fff"/><rect x="4" y="1" width="9" height="6" fill="#d83058"/><rect x="5" y="2" width="2" height="1" fill="#fff"/><rect x="9" y="3" width="2" height="1" fill="#fff"/><rect x="6" y="5" width="3" height="1" fill="#fff"/><rect x="4" y="8" width="10" height="2" fill="#505848"/><rect x="4" y="11" width="10" height="2" fill="#808878"/><rect x="3" y="14" width="11" height="1" fill="#707868"/></svg><div style="position:absolute;left:21px;top:2px;font-size:12px;line-height:14px;color:#fff;white-space:pre;will-change:transform;font-weight:bold;letter-spacing:0.05px;">DERA MASTER BATTLE PLANNER - [binni.pln:1]</div><div class="rb" style="position:absolute;left:1228px;top:2px;width:16px;height:14px;"></div><svg style="position:absolute;left:1228px;top:2px" width="16" height="14" viewBox="0 0 16 14" shape-rendering="crispEdges" ><rect x="4" y="9" width="6" height="2" fill="#000"/></svg><div class="rb" style="position:absolute;left:1244px;top:2px;width:16px;height:14px;"></div><svg style="position:absolute;left:1244px;top:2px" width="16" height="14" viewBox="0 0 16 14" shape-rendering="crispEdges" ><rect x="6" y="2" width="6" height="5" fill="none" stroke="#000"/><rect x="5.5" y="1.5" width="7" height="1.5" fill="#000"/><rect x="3.5" y="5.5" width="6" height="5" fill="#879cb8" stroke="#000"/><rect x="3" y="5" width="7" height="1.5" fill="#000"/></svg><div class="rb" style="position:absolute;left:1262px;top:2px;width:16px;height:14px;"></div><svg style="position:absolute;left:1262px;top:2px" width="16" height="14" viewBox="0 0 16 14" shape-rendering="crispEdges" ><path d="M4 3L11 10M11 3L4 10" stroke="#000" stroke-width="1.6" fill="none" shape-rendering="auto"/></svg><div class="" style="position:absolute;left:0px;top:18px;width:1280px;height:21px;background:#879cb8"></div><div class="" style="position:absolute;left:0px;top:17px;width:1280px;height:1px;background:#43597a"></div><div class="" style="position:absolute;left:0px;top:38px;width:1280px;height:1px;background:#5a6e8c"></div><svg style="position:absolute;left:4px;top:20px" width="16" height="16" viewBox="0 0 16 16" shape-rendering="crispEdges" ><path d="M0.5 0.5H15.5V9L8 15.5H0.5Z" fill="#fff" stroke="#333" stroke-dasharray="1 1"/><rect x="3" y="2" width="9" height="2" fill="#e03050"/><rect x="3" y="7" width="8" height="1" fill="#ddd"/><rect x="3" y="10" width="6" height="1" fill="#ddd"/></svg><div style="position:absolute;left:26px;top:21px;font-size:12px;line-height:14px;color:#000;white-space:pre;will-change:transform;transform:scaleX(0.92);transform-origin:0 0;"><u>P</u>lan</div><div style="position:absolute;left:59px;top:21px;font-size:12px;line-height:14px;color:#000;white-space:pre;will-change:transform;transform:scaleX(0.92);transform-origin:0 0;"><u>V</u>iew</div><div style="position:absolute;left:94px;top:21px;font-size:12px;line-height:14px;color:#000;white-space:pre;will-change:transform;transform:scaleX(0.92);transform-origin:0 0;"><u>S</u>cenario</div><div style="position:absolute;left:148px;top:21px;font-size:12px;line-height:14px;color:#000;white-space:pre;will-change:transform;transform:scaleX(0.92);transform-origin:0 0;"><u>M</u>ap</div><div style="position:absolute;left:181px;top:21px;font-size:12px;line-height:14px;color:#000;white-space:pre;will-change:transform;transform:scaleX(0.92);transform-origin:0 0;">Map <u>O</u>bjects</div><div style="position:absolute;left:253px;top:21px;font-size:12px;line-height:14px;color:#000;white-space:pre;will-change:transform;transform:scaleX(0.92);transform-origin:0 0;"><u>A</u>nalysis</div><div style="position:absolute;left:303px;top:21px;font-size:12px;line-height:14px;color:#000;white-space:pre;will-change:transform;transform:scaleX(0.92);transform-origin:0 0;"><u>W</u>indow</div><div style="position:absolute;left:354px;top:21px;font-size:12px;line-height:14px;color:#000;white-space:pre;will-change:transform;transform:scaleX(0.92);transform-origin:0 0;">Status</div><div style="position:absolute;left:396px;top:21px;font-size:12px;line-height:14px;color:#000;white-space:pre;will-change:transform;transform:scaleX(0.92);transform-origin:0 0;"><u>H</u>elp</div><div class="rb" style="position:absolute;left:1228px;top:21px;width:16px;height:14px;"></div><svg style="position:absolute;left:1228px;top:21px" width="16" height="14" viewBox="0 0 16 14" shape-rendering="crispEdges" ><rect x="4" y="9" width="6" height="2" fill="#000"/></svg><div class="rb" style="position:absolute;left:1244px;top:21px;width:16px;height:14px;"></div><svg style="position:absolute;left:1244px;top:21px" width="16" height="14" viewBox="0 0 16 14" shape-rendering="crispEdges" ><rect x="6" y="2" width="6" height="5" fill="none" stroke="#000"/><rect x="5.5" y="1.5" width="7" height="1.5" fill="#000"/><rect x="3.5" y="5.5" width="6" height="5" fill="#879cb8" stroke="#000"/><rect x="3" y="5" width="7" height="1.5" fill="#000"/></svg><div class="rb" style="position:absolute;left:1262px;top:21px;width:16px;height:14px;"></div><svg style="position:absolute;left:1262px;top:21px" width="16" height="14" viewBox="0 0 16 14" shape-rendering="crispEdges" ><path d="M4 3L11 10M11 3L4 10" stroke="#000" stroke-width="1.6" fill="none" shape-rendering="auto"/></svg><div class="" style="position:absolute;left:0px;top:39px;width:1280px;height:1px;background:#b8c8e0"></div><div class="" style="position:absolute;left:0px;top:40px;width:1280px;height:28px;background:#879cb8"></div><div class="rb" style="position:absolute;left:6px;top:43px;width:23px;height:22px;"></div><svg style="position:absolute;left:6px;top:43px" width="23" height="22" viewBox="0 0 23 22" shape-rendering="crispEdges" ><path d="M6.500 3.500H13.500L16.500 6.500V15.500H6.500Z" fill="#dce0ea" stroke="#000"/><path d="M13.500 3.500V6.500H16.500" fill="none" stroke="#000"/></svg><div class="rb" style="position:absolute;left:29px;top:43px;width:23px;height:22px;"></div><svg style="position:absolute;left:29px;top:43px" width="23" height="22" viewBox="0 0 23 22" shape-rendering="crispEdges" ><path d="M4.500 7.500V15.500H15.500V7.500H9.500L8.500 6.500H5.500Z" fill="#c8d0e0" stroke="#000"/><path d="M4.500 15.500L7.500 10.500H18.500L15.500 15.500Z" fill="#586880" stroke="#000"/><path d="M12 5C13 3 16 3 17.500 5.500M17.500 3V5.800H15" fill="none" stroke="#000" shape-rendering="auto"/></svg><div class="rb" style="position:absolute;left:52px;top:43px;width:23px;height:22px;"></div><svg style="position:absolute;left:52px;top:43px" width="23" height="22" viewBox="0 0 23 22" shape-rendering="crispEdges" ><rect x="5.500" y="3.500" width="13" height="13" fill="#384048" stroke="#000"/><rect x="8" y="4" width="8" height="6" fill="#8494ac"/><rect x="14" y="5" width="1" height="4" fill="#c8d0e0"/><rect x="8" y="12" width="8" height="4" fill="#000"/><rect x="13" y="12" width="2" height="4" fill="#c0c8d8"/></svg><div class="rb" style="position:absolute;left:83px;top:43px;width:23px;height:22px;"></div><svg style="position:absolute;left:83px;top:43px" width="23" height="22" viewBox="0 0 23 22" shape-rendering="crispEdges" ><path d="M8 3.500H17.500L14.500 10.500H5Z" fill="#e8e8f0" stroke="#000" shape-rendering="auto"/><path d="M8.500 5.500H15M7.500 7.500H14" stroke="#000" fill="none"/><g transform="translate(4,12.6) scale(1,1)" fill="#000"><rect x="0" y="0" width="1" height="1"/><rect x="4" y="0" width="1" height="1"/><rect x="0" y="1" width="2" height="1"/><rect x="3" y="1" width="2" height="1"/><rect x="0" y="2" width="1" height="1"/><rect x="2" y="2" width="1" height="1"/><rect x="4" y="2" width="1" height="1"/><rect x="0" y="3" width="1" height="1"/><rect x="4" y="3" width="1" height="1"/><rect x="0" y="4" width="1" height="1"/><rect x="4" y="4" width="1" height="1"/><rect x="6" y="0" width="3" height="1"/><rect x="6" y="1" width="1" height="1"/><rect x="9" y="1" width="1" height="1"/><rect x="6" y="2" width="3" height="1"/><rect x="6" y="3" width="1" height="1"/><rect x="9" y="3" width="1" height="1"/><rect x="6" y="4" width="3" height="1"/><rect x="11" y="0" width="3" height="1"/><rect x="11" y="1" width="1" height="1"/><rect x="14" y="1" width="1" height="1"/><rect x="11" y="2" width="3" height="1"/><rect x="11" y="3" width="1" height="1"/><rect x="11" y="4" width="1" height="1"/></g></svg><div class="rb" style="position:absolute;left:114px;top:43px;width:23px;height:22px;"></div><svg style="position:absolute;left:114px;top:43px" width="23" height="22" viewBox="0 0 23 22" shape-rendering="crispEdges" ><path d="M8 2.500L15.500 2.500L17.500 7H6Z" fill="#1830a0" stroke="#000" stroke-width=".6" shape-rendering="auto"/><path d="M9.500 5.500L13.500 3.500L12 6.500Z" fill="#20e040" shape-rendering="auto"/><path d="M3.500 9.500L6 7.500H17L19.500 9.500V13.500H3.500Z" fill="#c0c8d8" stroke="#000"/><rect x="4.500" y="11.500" width="13" height="5" fill="#a8b4c8" stroke="#000"/><path d="M5 13.500H17" stroke="#000"/><rect x="16" y="9" width="2" height="1" fill="#000"/></svg><div class="rb" style="position:absolute;left:153px;top:43px;width:23px;height:22px;"></div><svg style="position:absolute;left:153px;top:43px" width="23" height="22" viewBox="0 0 23 22" shape-rendering="crispEdges" ><path d="M10.500 4L16 9.800H12.500V17H8.500V9.800H5Z" fill="#000" shape-rendering="auto"/></svg><div class="rb" style="position:absolute;left:176px;top:43px;width:23px;height:22px;"></div><svg style="position:absolute;left:176px;top:43px" width="23" height="22" viewBox="0 0 23 22" shape-rendering="crispEdges" ><path d="M10.500 17L16 11.200H12.500V4H8.500V11.200H5Z" fill="#000" shape-rendering="auto"/></svg><div class="rb" style="position:absolute;left:199px;top:43px;width:23px;height:22px;"></div><svg style="position:absolute;left:199px;top:43px" width="23" height="22" viewBox="0 0 23 22" shape-rendering="crispEdges" ><path d="M17 10.500L11.200 5V8.500H4V12.500H11.200V16Z" fill="#000" shape-rendering="auto"/></svg><div class="rb" style="position:absolute;left:222px;top:43px;width:23px;height:22px;"></div><svg style="position:absolute;left:222px;top:43px" width="23" height="22" viewBox="0 0 23 22" shape-rendering="crispEdges" ><path d="M4 10.500L9.800 5V8.500H17V12.500H9.800V16Z" fill="#000" shape-rendering="auto"/></svg><div class="rb" style="position:absolute;left:245px;top:43px;width:23px;height:22px;"></div><svg style="position:absolute;left:245px;top:43px" width="23" height="22" viewBox="0 0 23 22" shape-rendering="crispEdges" ><path d="M8 4.500H6L5.500 5V7L6 7.500H8" stroke="#000" fill="none"/><circle cx="13.500" cy="11.800" r="4.800" fill="#f0f0f8" stroke="#0000d8" stroke-width="2" shape-rendering="auto"/><rect x="12" y="10" width="3" height="4" fill="#e00000"/></svg><div class="rb" style="position:absolute;left:268px;top:43px;width:23px;height:22px;"></div><svg style="position:absolute;left:268px;top:43px" width="23" height="22" viewBox="0 0 23 22" shape-rendering="crispEdges" ><rect x="8" y="7" width="6" height="6" fill="#a8b8d0"/><rect x="6" y="4" width="10" height="2" fill="#000"/><rect x="6" y="15" width="10" height="2" fill="#000"/><path d="M15 6L7 15" stroke="#000" stroke-width="1.700" shape-rendering="auto"/></svg><div class="rb" style="position:absolute;left:291px;top:43px;width:23px;height:22px;"></div><svg style="position:absolute;left:291px;top:43px" width="23" height="22" viewBox="0 0 23 22" shape-rendering="crispEdges" ><rect x="5" y="4" width="12" height="12" fill="#a4b8d4"/><path d="M5.500 16.500V4.500H17M16.500 5V16.500H6" stroke="#c4d4ec" fill="none"/><path d="M8.500 7.300H13.500L8.500 13.400H14" stroke="#000" stroke-width="1" fill="none" shape-rendering="auto"/></svg><div class="rb" style="position:absolute;left:314px;top:43px;width:23px;height:22px;"></div><svg style="position:absolute;left:314px;top:43px" width="23" height="22" viewBox="0 0 23 22" shape-rendering="crispEdges" ><g transform="translate(3,3) scale(1,1)" fill="#000"><rect x="0" y="0" width="2" height="1"/><rect x="0" y="1" width="1" height="1"/><rect x="2" y="1" width="1" height="1"/><rect x="0" y="2" width="2" height="1"/><rect x="0" y="3" width="1" height="1"/><rect x="2" y="3" width="1" height="1"/><rect x="0" y="4" width="1" height="1"/><rect x="2" y="4" width="1" height="1"/></g><path d="M7 8.500L18.500 8L17.500 12L18 17L6 17.500L7 13Z" fill="#20e040" shape-rendering="auto"/><path d="M5.500 17.500L7 13L6.500 8.500L11 8.300L9.500 11L11 14L9.500 17.300Z" fill="#0000c8" shape-rendering="auto"/></svg><div class="rb" style="position:absolute;left:337px;top:43px;width:23px;height:22px;"></div><svg style="position:absolute;left:337px;top:43px" width="23" height="22" viewBox="0 0 23 22" shape-rendering="crispEdges" ><rect x="4.500" y="4.500" width="13" height="12" fill="#b4c4e4" stroke="#000"/><path d="M6.500 6.500H13M6.500 8.500H13M6.500 10.500H13M6.500 12.500H13M6.500 14.500H13" stroke="#4058c8" stroke-dasharray="1 1" fill="none"/><rect x="14" y="5" width="3" height="11" fill="#383838"/><path d="M15.500 6V15" stroke="#d8d8d8" stroke-dasharray="1 2"/><path d="M5 5.500H17" stroke="#000"/></svg><div class="rb" style="position:absolute;left:360px;top:43px;width:23px;height:22px;"></div><svg style="position:absolute;left:360px;top:43px" width="23" height="22" viewBox="0 0 23 22" shape-rendering="crispEdges" ><path d="M4 4.200H18.700V6.800H13V16.700H10V6.800H4Z" fill="#f00000"/></svg><div class="rb" style="position:absolute;left:383px;top:43px;width:23px;height:22px;"></div><svg style="position:absolute;left:383px;top:43px" width="23" height="22" viewBox="0 0 23 22" shape-rendering="crispEdges" ><path d="M5.500 16.500L7 13.500L16 4.500Q18 4 18.500 6.500L9.500 15.500Z" fill="#f4f4f4" stroke="#000" shape-rendering="auto"/><path d="M4.500 17.600L7 13.500L9.500 15.500Z" fill="#000" shape-rendering="auto"/></svg><div class="rb" style="position:absolute;left:422px;top:43px;width:23px;height:22px;"></div><svg style="position:absolute;left:422px;top:43px" width="23" height="22" viewBox="0 0 23 22" shape-rendering="crispEdges" ><path d="M11.200 5.500L17 16H5.400Z" fill="none" stroke="#d82848" stroke-width="1.100" shape-rendering="auto"/></svg><div class="rb" style="position:absolute;left:445px;top:43px;width:23px;height:22px;"></div><svg style="position:absolute;left:445px;top:43px" width="23" height="22" viewBox="0 0 23 22" shape-rendering="crispEdges" ><g transform="translate(4,4) scale(1,1)" fill="#000"><rect x="0" y="0" width="2" height="1"/><rect x="0" y="1" width="1" height="1"/><rect x="2" y="1" width="1" height="1"/><rect x="0" y="2" width="1" height="1"/><rect x="2" y="2" width="1" height="1"/><rect x="0" y="3" width="1" height="1"/><rect x="2" y="3" width="1" height="1"/><rect x="0" y="4" width="2" height="1"/><rect x="4" y="0" width="1" height="1"/><rect x="6" y="0" width="1" height="1"/><rect x="4" y="1" width="3" height="1"/><rect x="4" y="2" width="3" height="1"/><rect x="4" y="3" width="1" height="1"/><rect x="6" y="3" width="1" height="1"/><rect x="4" y="4" width="1" height="1"/><rect x="6" y="4" width="1" height="1"/><rect x="8" y="0" width="2" height="1"/><rect x="8" y="1" width="1" height="1"/><rect x="10" y="1" width="1" height="1"/><rect x="8" y="2" width="2" height="1"/><rect x="8" y="3" width="1" height="1"/><rect x="8" y="4" width="1" height="1"/><rect x="12" y="0" width="1" height="1"/><rect x="12" y="1" width="1" height="1"/><rect x="12" y="2" width="1" height="1"/><rect x="12" y="3" width="1" height="1"/><rect x="12" y="4" width="1" height="1"/></g><path d="M15 10L19.400 17.600H10.600Z" fill="#f00000" shape-rendering="auto"/></svg><div class="rb" style="position:absolute;left:468px;top:43px;width:23px;height:22px;"></div><svg style="position:absolute;left:468px;top:43px" width="23" height="22" viewBox="0 0 23 22" shape-rendering="crispEdges" ><path d="M4 10.500H18M4 13.800L18 6.600" stroke="#50d8e0" stroke-width="1.200" fill="none" shape-rendering="auto"/></svg><div class="rb" style="position:absolute;left:491px;top:43px;width:23px;height:22px;"></div><svg style="position:absolute;left:491px;top:43px" width="23" height="22" viewBox="0 0 23 22" shape-rendering="crispEdges" ><path d="M10.5 3.2l1.300 2v3.200l4.200 3.600v1.800l-4.200-1.400v3l2.200 1.600v1.200l-3.500-.8l-3.500 .8v-1.200l2.200-1.600v-3l-4.200 1.400v-1.800l4.200-3.600v-3.200z" fill="#000" shape-rendering="auto"/><path d="M16.500 4V8.500M14.500 6.500L16.500 8.500H18.500" stroke="#000" fill="none"/></svg><div class="rb" style="position:absolute;left:514px;top:43px;width:23px;height:22px;"></div><svg style="position:absolute;left:514px;top:43px" width="23" height="22" viewBox="0 0 23 22" shape-rendering="crispEdges" ><path d="M3 11L4 8.500L10 5.500L12 8.500L6 12.500Z" fill="#f00000" shape-rendering="auto"/><path d="M10 5.500L10.500 3L15 7.500L12 8.500Z" fill="#000" shape-rendering="auto"/><g transform="translate(8,13) scale(1,1)" fill="#000"><rect x="1" y="0" width="2" height="1"/><rect x="0" y="1" width="1" height="1"/><rect x="1" y="2" width="1" height="1"/><rect x="2" y="3" width="1" height="1"/><rect x="0" y="4" width="2" height="1"/><rect x="5" y="0" width="2" height="1"/><rect x="4" y="1" width="1" height="1"/><rect x="4" y="2" width="1" height="1"/><rect x="4" y="3" width="1" height="1"/><rect x="5" y="4" width="2" height="1"/><rect x="8" y="0" width="1" height="1"/><rect x="8" y="1" width="1" height="1"/><rect x="8" y="2" width="1" height="1"/><rect x="8" y="3" width="1" height="1"/><rect x="8" y="4" width="3" height="1"/></g></svg><div class="rb" style="position:absolute;left:537px;top:43px;width:23px;height:22px;"></div><svg style="position:absolute;left:537px;top:43px" width="23" height="22" viewBox="0 0 23 22" shape-rendering="crispEdges" ><path d="M10.5 3.2l1.300 2v3.200l4.200 3.600v1.800l-4.200-1.400v3l2.200 1.600v1.200l-3.500-.8l-3.500 .8v-1.200l2.200-1.600v-3l-4.200 1.400v-1.800l4.200-3.600v-3.200z" fill="#000" shape-rendering="auto"/></svg><div class="rb" style="position:absolute;left:560px;top:43px;width:23px;height:22px;"></div><svg style="position:absolute;left:560px;top:43px" width="23" height="22" viewBox="0 0 23 22" shape-rendering="crispEdges" ><path d="M7.500 4.500Q7.500 9 11 11H15M11 11V16M6.500 16.500H16" stroke="#0010e8" stroke-width="1.800" fill="none" shape-rendering="auto"/></svg><div class="rb" style="position:absolute;left:583px;top:43px;width:23px;height:22px;"></div><svg style="position:absolute;left:583px;top:43px" width="23" height="22" viewBox="0 0 23 22" shape-rendering="crispEdges" ><path d="M10.500 4L12 5.500V10.500L15 14V17L10.500 13L6 17V14L9 10.500V5.500Z" fill="#0010e8" shape-rendering="auto"/></svg><div class="rb" style="position:absolute;left:606px;top:43px;width:23px;height:22px;"></div><svg style="position:absolute;left:606px;top:43px" width="23" height="22" viewBox="0 0 23 22" shape-rendering="crispEdges" ><rect x="4" y="5" width="14" height="11" fill="#0000e8"/><path d="M6.500 7.500H15.500M6.500 13.500H15.500M6.500 7.500L15.500 13.500M15.500 7.500L6.500 13.500" stroke="#b0c4e8" stroke-width="1.200" fill="none" shape-rendering="auto"/></svg><div class="rb" style="position:absolute;left:629px;top:43px;width:23px;height:22px;"></div><svg style="position:absolute;left:629px;top:43px" width="23" height="22" viewBox="0 0 23 22" shape-rendering="crispEdges" ><g transform="translate(3,15) scale(0.64,0.74)"><path d="M0 -4L1 -4L2 -3L5 -4V-12H6V-7L7 -8H9L10 -7L11.500 -9L11 -12L10 -15H12V-17H13V-15L14 -14H13V-12L14 -11H13L14 -8H16V-12H17V-8L18 -6L19 -7H22L23 -5L25 -4V-2.500L23 0H0Z" fill="#0000e8"/></g></svg><div class="rb" style="position:absolute;left:652px;top:43px;width:23px;height:22px;"></div><svg style="position:absolute;left:652px;top:43px" width="23" height="22" viewBox="0 0 23 22" shape-rendering="crispEdges" ><path d="M6 17V4.800H7.500L11.500 11.500L15.500 4.800H17V17" stroke="#000" stroke-width="1.800" fill="none" shape-rendering="auto" stroke-linejoin="miter"/></svg><div class="rb" style="position:absolute;left:675px;top:43px;width:23px;height:22px;"></div><svg style="position:absolute;left:675px;top:43px" width="23" height="22" viewBox="0 0 23 22" shape-rendering="crispEdges" ><path d="M9 17V5H14Q16.500 5 16.500 8V8.500Q16.500 11.500 14 11.500H9" stroke="#000" stroke-width="1.800" fill="none" shape-rendering="auto"/></svg><div class="rb" style="position:absolute;left:698px;top:43px;width:23px;height:22px;"></div><svg style="position:absolute;left:698px;top:43px" width="23" height="22" viewBox="0 0 23 22" shape-rendering="crispEdges" ><path d="M3 3H10V5H8.500V10.500H9.500V12H3.500V10.500H4.500V5H3Z" fill="#000"/><path d="M4.500 3V4M6.500 3V4M8.500 3V4" stroke="#879cb8"/><g transform="translate(4,13) scale(1,1)" fill="#000"><rect x="1" y="0" width="2" height="1"/><rect x="0" y="1" width="1" height="1"/><rect x="3" y="1" width="1" height="1"/><rect x="0" y="2" width="4" height="1"/><rect x="0" y="3" width="1" height="1"/><rect x="3" y="3" width="1" height="1"/><rect x="0" y="4" width="1" height="1"/><rect x="3" y="4" width="1" height="1"/><rect x="6" y="0" width="3" height="1"/><rect x="5" y="1" width="1" height="1"/><rect x="5" y="2" width="1" height="1"/><rect x="5" y="3" width="1" height="1"/><rect x="6" y="4" width="3" height="1"/><rect x="11" y="0" width="2" height="1"/><rect x="10" y="1" width="1" height="1"/><rect x="13" y="1" width="1" height="1"/><rect x="10" y="2" width="1" height="1"/><rect x="13" y="2" width="1" height="1"/><rect x="10" y="3" width="1" height="1"/><rect x="13" y="3" width="1" height="1"/><rect x="11" y="4" width="2" height="1"/></g></svg><div class="rb" style="position:absolute;left:737px;top:43px;width:23px;height:22px;"></div><svg style="position:absolute;left:737px;top:43px" width="23" height="22" viewBox="0 0 23 22" shape-rendering="crispEdges" ><path d="M3.500 9.500V4.500L5.500 7L7.500 4.500V9.500" stroke="#000" fill="none" shape-rendering="auto"/><g transform="translate(9,9)"><rect x="0" y="0" width="10" height="9" fill="#000"/><rect x="1" y="1" width="9" height="7" fill="#fff"/><rect x="2" y="1" width="4" height="2" fill="#0000c0"/><rect x="5" y="3" width="4" height="2" fill="#0000c0"/><rect x="7" y="5" width="3" height="1" fill="#0000c0"/><rect x="2" y="5" width="4" height="2" fill="#0000c0"/></g></svg><div class="rb" style="position:absolute;left:760px;top:43px;width:23px;height:22px;"></div><svg style="position:absolute;left:760px;top:43px" width="23" height="22" viewBox="0 0 23 22" shape-rendering="crispEdges" ><path d="M2.8 4.2h5v1.500h-2.800l2 2l-2 2h2.800v1.500h-5v-1.200l2.300-2.300l-2.300-2.300z" fill="#000"/><g transform="translate(9,9)"><rect x="0" y="0" width="10" height="9" fill="#000"/><rect x="1" y="1" width="9" height="7" fill="#fff"/><rect x="2" y="1" width="4" height="2" fill="#0000c0"/><rect x="5" y="3" width="4" height="2" fill="#0000c0"/><rect x="7" y="5" width="3" height="1" fill="#0000c0"/><rect x="2" y="5" width="4" height="2" fill="#0000c0"/></g></svg><div class="rb" style="position:absolute;left:783px;top:43px;width:23px;height:22px;"></div><svg style="position:absolute;left:783px;top:43px" width="23" height="22" viewBox="0 0 23 22" shape-rendering="crispEdges" ><g transform="translate(3,3) scale(1,1)" fill="#000"><rect x="0" y="0" width="1" height="1"/><rect x="0" y="1" width="1" height="1"/><rect x="0" y="2" width="1" height="1"/><rect x="0" y="3" width="1" height="1"/><rect x="0" y="4" width="3" height="1"/><rect x="4" y="0" width="1" height="1"/><rect x="4" y="1" width="1" height="1"/><rect x="4" y="2" width="1" height="1"/><rect x="4" y="3" width="1" height="1"/><rect x="4" y="4" width="3" height="1"/><rect x="8" y="0" width="3" height="1"/><rect x="9" y="1" width="1" height="1"/><rect x="9" y="2" width="1" height="1"/><rect x="9" y="3" width="1" height="1"/><rect x="9" y="4" width="1" height="1"/><rect x="12" y="0" width="2" height="1"/><rect x="12" y="1" width="1" height="1"/><rect x="14" y="1" width="1" height="1"/><rect x="12" y="2" width="2" height="1"/><rect x="12" y="3" width="1" height="1"/><rect x="14" y="3" width="1" height="1"/><rect x="12" y="4" width="1" height="1"/><rect x="14" y="4" width="1" height="1"/></g><g transform="translate(9.5,9)"><rect x="0" y="0" width="10" height="9" fill="#000"/><rect x="1" y="1" width="9" height="7" fill="#fff"/><rect x="2" y="1" width="4" height="2" fill="#0000c0"/><rect x="5" y="3" width="4" height="2" fill="#0000c0"/><rect x="7" y="5" width="3" height="1" fill="#0000c0"/><rect x="2" y="5" width="4" height="2" fill="#0000c0"/></g></svg><div class="rb" style="position:absolute;left:806px;top:43px;width:23px;height:22px;"></div><svg style="position:absolute;left:806px;top:43px" width="23" height="22" viewBox="0 0 23 22" shape-rendering="crispEdges" ><path d="M5.600 3.900l.6 .8v1.300l2.300 1.700v.9l-2.300-.7v.8l1 .6v.6l-1.600-.3l-1.600 .3v-.6l1-.6v-.8l-2.300 .7v-.9l2.300-1.700v-1.300z" fill="#000" shape-rendering="auto"/><g transform="translate(9,9)"><rect x="1" y="0" width="9" height="8" fill="#d4dce4"/><path d="M0.500 0V8.500H10" stroke="#000" fill="none"/><rect x="2" y="3" width="1" height="5" fill="#0030c0"/><rect x="4" y="2" width="1" height="6" fill="#00a040"/><rect x="6" y="4" width="1" height="4" fill="#208060"/><rect x="8" y="1" width="1" height="7" fill="#40c040"/><rect x="7" y="1" width="1" height="2" fill="#e08080"/></g></svg><div class="rb" style="position:absolute;left:829px;top:43px;width:23px;height:22px;"></div><svg style="position:absolute;left:829px;top:43px" width="23" height="22" viewBox="0 0 23 22" shape-rendering="crispEdges" ><path d="M2.8 4.2h5v1.500h-2.800l2 2l-2 2h2.800v1.500h-5v-1.200l2.300-2.300l-2.300-2.300z" fill="#000"/><g transform="translate(9,9)"><rect x="1" y="0" width="9" height="8" fill="#d4dce4"/><path d="M0.500 0V8.500H10" stroke="#000" fill="none"/><rect x="2" y="3" width="1" height="5" fill="#0030c0"/><rect x="4" y="2" width="1" height="6" fill="#00a040"/><rect x="6" y="4" width="1" height="4" fill="#208060"/><rect x="8" y="1" width="1" height="7" fill="#40c040"/><rect x="7" y="1" width="1" height="2" fill="#e08080"/></g></svg><div class="rb" style="position:absolute;left:852px;top:43px;width:23px;height:22px;"></div><svg style="position:absolute;left:852px;top:43px" width="23" height="22" viewBox="0 0 23 22" shape-rendering="crispEdges" ><g transform="translate(4,3.2) scale(1,1.2)" fill="#000"><rect x="1" y="0" width="2" height="1"/><rect x="0" y="1" width="1" height="1"/><rect x="3" y="1" width="1" height="1"/><rect x="0" y="2" width="4" height="1"/><rect x="0" y="3" width="1" height="1"/><rect x="3" y="3" width="1" height="1"/><rect x="0" y="4" width="1" height="1"/><rect x="3" y="4" width="1" height="1"/><rect x="5" y="0" width="3" height="1"/><rect x="5" y="1" width="1" height="1"/><rect x="8" y="1" width="1" height="1"/><rect x="5" y="2" width="3" height="1"/><rect x="5" y="3" width="1" height="1"/><rect x="5" y="4" width="1" height="1"/><rect x="10" y="0" width="3" height="1"/><rect x="10" y="1" width="1" height="1"/><rect x="13" y="1" width="1" height="1"/><rect x="10" y="2" width="3" height="1"/><rect x="10" y="3" width="1" height="1"/><rect x="10" y="4" width="1" height="1"/></g><g transform="translate(6,11)"><rect x="1" y="0" width="12" height="6" fill="#c8d8f4"/><path d="M0.500 0V6.500H13M2.500 2V6M4.500 3V6M6.500 1V6M8.500 3V6M10.500 1V6M12.500 3V6" stroke="#0000b0" fill="none"/></g></svg><div class="rb" style="position:absolute;left:875px;top:43px;width:23px;height:22px;"></div><svg style="position:absolute;left:875px;top:43px" width="23" height="22" viewBox="0 0 23 22" shape-rendering="crispEdges" ><path d="M3 4h5v1.500h-2.800l2 2l-2 2h2.800v1.500h-5v-1.200l2.300-2.300l-2.300-2.300z" fill="#000"/><g transform="translate(7.5,11)"><rect x="1" y="0" width="12" height="6" fill="#c8d8f4"/><path d="M0.500 0V6.500H13M2.500 2V6M4.500 3V6M6.500 1V6M8.500 3V6M10.500 1V6M12.500 3V6" stroke="#0000b0" fill="none"/></g></svg><div class="rb" style="position:absolute;left:898px;top:43px;width:23px;height:22px;"></div><svg style="position:absolute;left:898px;top:43px" width="23" height="22" viewBox="0 0 23 22" shape-rendering="crispEdges" ><g transform="translate(3,3.6) scale(1.1,1.25)" fill="#000"><rect x="0" y="0" width="3" height="1"/><rect x="0" y="1" width="1" height="1"/><rect x="3" y="1" width="1" height="1"/><rect x="0" y="2" width="3" height="1"/><rect x="0" y="3" width="1" height="1"/><rect x="3" y="3" width="1" height="1"/><rect x="0" y="4" width="3" height="1"/><rect x="6" y="0" width="3" height="1"/><rect x="5" y="1" width="1" height="1"/><rect x="5" y="2" width="1" height="1"/><rect x="7" y="2" width="2" height="1"/><rect x="5" y="3" width="1" height="1"/><rect x="8" y="3" width="1" height="1"/><rect x="6" y="4" width="3" height="1"/></g><g transform="translate(10,10.2)" shape-rendering="auto"><ellipse cx="4.600" cy="4.400" rx="4.600" ry="3.800" fill="#000"/><circle cx="4.600" cy="3.700" r="3.600" fill="#0828c8"/><path d="M4.600 3.700L4.600 0.100A3.600 3.600 0 0 0 1 3.700Z" fill="#60d0e8"/><path d="M4.600 3.700H1A3.600 3.600 0 0 0 2.800 6.800Z" fill="#e01010"/><path d="M4.600 3.700L2.800 6.800A3.600 3.600 0 0 0 7 6.400Z" fill="#f0e020"/></g></svg><div class="rb" style="position:absolute;left:921px;top:43px;width:23px;height:22px;"></div><svg style="position:absolute;left:921px;top:43px" width="23" height="22" viewBox="0 0 23 22" shape-rendering="crispEdges" ><path d="M3 3.4h5v1.500h-2.800l2 2l-2 2h2.800v1.500h-5v-1.200l2.300-2.300l-2.300-2.300z" fill="#000"/><g transform="translate(10,10.2)" shape-rendering="auto"><ellipse cx="4.600" cy="4.400" rx="4.600" ry="3.800" fill="#000"/><circle cx="4.600" cy="3.700" r="3.600" fill="#0828c8"/><path d="M4.600 3.700L4.600 0.100A3.600 3.600 0 0 0 1 3.700Z" fill="#60d0e8"/><path d="M4.600 3.700H1A3.600 3.600 0 0 0 2.800 6.800Z" fill="#e01010"/><path d="M4.600 3.700L2.800 6.800A3.600 3.600 0 0 0 7 6.400Z" fill="#f0e020"/></g></svg><div class="rb" style="position:absolute;left:944px;top:43px;width:23px;height:22px;"></div><svg style="position:absolute;left:944px;top:43px" width="23" height="22" viewBox="0 0 23 22" shape-rendering="crispEdges" ><g transform="translate(5,3.6) scale(1,1.25)" fill="#000"><rect x="1" y="0" width="3" height="1"/><rect x="0" y="1" width="1" height="1"/><rect x="1" y="2" width="2" height="1"/><rect x="3" y="3" width="1" height="1"/><rect x="0" y="4" width="3" height="1"/></g><g transform="translate(13,11.6) scale(1,1.25)" fill="#000"><rect x="0" y="0" width="3" height="1"/><rect x="0" y="1" width="1" height="1"/><rect x="3" y="1" width="1" height="1"/><rect x="0" y="2" width="3" height="1"/><rect x="0" y="3" width="1" height="1"/><rect x="2" y="3" width="1" height="1"/><rect x="0" y="4" width="1" height="1"/><rect x="3" y="4" width="1" height="1"/></g><path d="M12 7.400H19M14 5L16.500 7.400L14 9.800M17 5.800L19 7.400L17 9" stroke="#0020e8" stroke-width="1.200" fill="none" shape-rendering="auto"/><path d="M10.400 13.500H3M8.400 11L6 13.500L8.400 16M5 12L3 13.500L5 15" stroke="#f01828" stroke-width="1.200" fill="none" shape-rendering="auto"/></svg><div class="rb" style="position:absolute;left:967px;top:43px;width:23px;height:22px;"></div><svg style="position:absolute;left:967px;top:43px" width="23" height="22" viewBox="0 0 23 22" shape-rendering="crispEdges" ><rect x="3" y="3" width="16" height="15" fill="#f80808"/><rect x="4.500" y="4.500" width="13" height="12" fill="none" stroke="#ff9898"/><text x="6" y="11" font-family="Liberation Sans" font-size="7.5" fill="#700000" font-weight="bold" >D</text><text x="10" y="14.5" font-family="Liberation Sans" font-size="7.5" fill="#700000" font-weight="bold" >T</text></svg><div class="rb" style="position:absolute;left:998px;top:43px;width:23px;height:22px;"></div><svg style="position:absolute;left:998px;top:43px" width="23" height="22" viewBox="0 0 23 22" shape-rendering="crispEdges" ><text x="6.3" y="17" font-family="Liberation Sans" font-size="17" fill="#000" font-weight="bold" >?</text></svg><div class="" style="position:absolute;left:0px;top:976px;width:1280px;height:1px;background:#6c80a0"></div><div class="" style="position:absolute;left:0px;top:977px;width:1280px;height:1px;background:#c0d0e8"></div><div class="" style="position:absolute;left:0px;top:978px;width:1280px;height:19px;background:#879cb8"></div><div style="position:absolute;left:3px;top:980.5px;font-size:12px;line-height:14px;color:#000;white-space:pre;will-change:transform;transform:scaleX(0.93);transform-origin:0 0;">Ready</div><div class="sk" style="position:absolute;left:352px;top:979px;width:27px;height:17px;"></div><div class="sk" style="position:absolute;left:381px;top:979px;width:31px;height:17px;"></div><div style="position:absolute;left:383.5px;top:981px;font-size:12px;line-height:14px;color:#000;white-space:pre;will-change:transform;transform:scaleX(0.9);transform-origin:0 0;">NUM</div><div class="sk" style="position:absolute;left:414px;top:979px;width:33px;height:17px;"></div><div class="sk" style="position:absolute;left:449px;top:979px;width:84px;height:17px;"></div><div style="position:absolute;left:452px;top:981px;font-size:12px;line-height:14px;color:#000;white-space:pre;will-change:transform;transform:scaleX(0.895);transform-origin:0 0;">Unclassified</div><div class="sk" style="position:absolute;left:535px;top:979px;width:99px;height:17px;"></div><div style="position:absolute;left:537.5px;top:981px;font-size:12px;line-height:14px;color:#000;white-space:pre;will-change:transform;transform:scaleX(0.91);transform-origin:0 0;">June 20, 2000</div><div class="sk" style="position:absolute;left:636px;top:979px;width:109px;height:17px;"></div><div class="sk" style="position:absolute;left:747px;top:979px;width:204px;height:17px;"></div><div style="position:absolute;left:751px;top:981px;font-size:12px;line-height:14px;color:#000;white-space:pre;will-change:transform;transform:scaleX(0.9);transform-origin:0 0;">LAT 211808N   LONG 0344907E</div><div class="sk" style="position:absolute;left:953px;top:979px;width:327px;height:17px;"></div><div class="" style="position:absolute;left:0px;top:997px;width:1280px;height:1px;background:#c0d0e8"></div><div class="" style="position:absolute;left:0px;top:998px;width:1280px;height:26px;background:#879cb8"></div><div class="rb" style="position:absolute;left:2px;top:1001px;width:54px;height:21px;"></div><svg style="position:absolute;left:5px;top:1003px" width="18" height="17" viewBox="0 0 18 17" shape-rendering="crispEdges" ><g shape-rendering="auto"><path d="M6 3C8.500 1.500 10 4 13 2.500C14.500 2 15.500 2.500 16.500 2V13.500C13.500 15.500 11 12.500 6 14.500Z" fill="#000"/><path d="M7 4C9 3 9.500 4.500 11 4.200V8C9.500 8.500 9 7.200 7 8.200Z" fill="#f02020"/><path d="M12 4.200C13.500 4.500 14 3.300 15.500 3.300V7.200C14 7.300 13.500 8.300 12 8Z" fill="#20c020"/><path d="M7 9.300C9 8.300 9.500 9.500 11 9.200V13C9.500 13.500 9 12.300 7 13.300Z" fill="#2040f0"/><path d="M12 9.200C13.500 9.500 14 8.300 15.500 8.300V12.200C14 12.300 13.500 13.300 12 13Z" fill="#f0e020"/></g><path d="M1 5h2M4 5h1M0 7h2M3 7h2M1 9h2M4 9h1M0 11h2M3 11h2M1 13h2M4 13h1" stroke="#000"/><path d="M2 6h2M1 8h2M2 10h2M1 12h2" stroke="#f02020"/></svg><div style="position:absolute;left:24px;top:1004px;font-size:12px;line-height:14px;color:#000;white-space:pre;will-change:transform;font-weight:bold;">Start</div><div class="rb" style="position:absolute;left:60px;top:1001px;width:50px;height:21px;"></div><svg style="position:absolute;left:64px;top:1003px" width="16" height="17" viewBox="0 0 16 17" shape-rendering="crispEdges" ><g shape-rendering="auto"><path d="M1.500 5Q1.500 1.500 6 1.500H11Q16 1.500 16 5V7Q16 10.500 11 10.500H10.500L9.500 14.500L6.500 10.500H6Q1.500 10.500 1.500 7Z" fill="#f4f088" stroke="#000" stroke-width="1.200"/></g><path d="M4 4.500H14M4 6.500H14M5 8.500H12" stroke="#303000" stroke-dasharray="3 1"/></svg><div style="position:absolute;left:82.5px;top:1004px;font-size:12px;line-height:14px;color:#000;white-space:pre;will-change:transform;transform:scaleX(0.88);transform-origin:0 0;">Joh...</div><div class="rb" style="position:absolute;left:113px;top:1001px;width:50px;height:21px;"></div><svg style="position:absolute;left:117px;top:1003px" width="16" height="17" viewBox="0 0 16 17" shape-rendering="crispEdges" ><rect x="1" y="6" width="9" height="10" fill="#d01020"/><path d="M1.500 16V7M9.500 16V9" stroke="#700010"/><path d="M3.500 14.500L7 7.500" stroke="#e848d0" stroke-width="2" shape-rendering="auto"/><path d="M6 15L8.500 10" stroke="#7010a0" stroke-width="1.500" shape-rendering="auto"/><path d="M3 1V6M5 2.500V6M7 1V6M3 1L5 3L7 1" stroke="#000" fill="none"/><path d="M10 1H15V6H10Z" fill="#000"/><rect x="11" y="2" width="1" height="1" fill="#fff"/><rect x="13" y="2" width="1" height="1" fill="#fff"/><rect x="12" y="4" width="1" height="1" fill="#fff"/><g shape-rendering="auto"><path d="M15 8.500Q12 5.500 10 8.500Q9.500 11 12.500 11.500Q15.500 12 14.500 14.500Q12.500 16.500 9.500 14.500" stroke="#000" stroke-width="3.600" fill="none"/><path d="M15 8.500Q12 5.500 10 8.500Q9.500 11 12.500 11.500Q15.500 12 14.500 14.500Q12.500 16.500 9.500 14.500" stroke="#f8f020" stroke-width="2" fill="none"/></g></svg><div style="position:absolute;left:135.5px;top:1004px;font-size:12px;line-height:14px;color:#000;white-space:pre;will-change:transform;transform:scaleX(0.88);transform-origin:0 0;">Co...</div><div class="rb" style="position:absolute;left:166px;top:1001px;width:50px;height:21px;"></div><svg style="position:absolute;left:170px;top:1003px" width="16" height="17" viewBox="0 0 16 17" shape-rendering="crispEdges" ><rect x="1" y="6" width="9" height="10" fill="#d01020"/><path d="M1.500 16V7M9.500 16V9" stroke="#700010"/><path d="M3.500 14.500L7 7.500" stroke="#e848d0" stroke-width="2" shape-rendering="auto"/><path d="M6 15L8.500 10" stroke="#7010a0" stroke-width="1.500" shape-rendering="auto"/><path d="M3 1V6M5 2.500V6M7 1V6M3 1L5 3L7 1" stroke="#000" fill="none"/><path d="M10 1H15V6H10Z" fill="#000"/><rect x="11" y="2" width="1" height="1" fill="#fff"/><rect x="13" y="2" width="1" height="1" fill="#fff"/><rect x="12" y="4" width="1" height="1" fill="#fff"/><g shape-rendering="auto"><path d="M15 8.500Q12 5.500 10 8.500Q9.500 11 12.500 11.500Q15.500 12 14.500 14.500Q12.500 16.500 9.500 14.500" stroke="#000" stroke-width="3.600" fill="none"/><path d="M15 8.500Q12 5.500 10 8.500Q9.500 11 12.500 11.500Q15.500 12 14.500 14.500Q12.500 16.500 9.500 14.500" stroke="#f8f020" stroke-width="2" fill="none"/></g></svg><div style="position:absolute;left:188.5px;top:1004px;font-size:12px;line-height:14px;color:#000;white-space:pre;will-change:transform;transform:scaleX(0.88);transform-origin:0 0;">C:\...</div><div class="rb" style="position:absolute;left:219px;top:1001px;width:50px;height:21px;"></div><svg style="position:absolute;left:223px;top:1003px" width="16" height="17" viewBox="0 0 16 17" shape-rendering="crispEdges" ><rect x="1" y="6" width="9" height="10" fill="#d01020"/><path d="M1.500 16V7M9.500 16V9" stroke="#700010"/><path d="M3.500 14.500L7 7.500" stroke="#e848d0" stroke-width="2" shape-rendering="auto"/><path d="M6 15L8.500 10" stroke="#7010a0" stroke-width="1.500" shape-rendering="auto"/><path d="M3 1V6M5 2.500V6M7 1V6M3 1L5 3L7 1" stroke="#000" fill="none"/><path d="M10 1H15V6H10Z" fill="#000"/><rect x="11" y="2" width="1" height="1" fill="#fff"/><rect x="13" y="2" width="1" height="1" fill="#fff"/><rect x="12" y="4" width="1" height="1" fill="#fff"/><g shape-rendering="auto"><path d="M15 8.500Q12 5.500 10 8.500Q9.500 11 12.500 11.500Q15.500 12 14.500 14.500Q12.500 16.500 9.500 14.500" stroke="#000" stroke-width="3.600" fill="none"/><path d="M15 8.500Q12 5.500 10 8.500Q9.500 11 12.500 11.500Q15.500 12 14.500 14.500Q12.500 16.500 9.500 14.500" stroke="#f8f020" stroke-width="2" fill="none"/></g></svg><div style="position:absolute;left:241.5px;top:1004px;font-size:12px;line-height:14px;color:#000;white-space:pre;will-change:transform;transform:scaleX(0.88);transform-origin:0 0;">C:\j...</div><div class="rb" style="position:absolute;left:272px;top:1001px;width:50px;height:21px;"></div><svg style="position:absolute;left:276px;top:1003px" width="16" height="17" viewBox="0 0 16 17" shape-rendering="crispEdges" ><rect x="1" y="6" width="9" height="10" fill="#d01020"/><path d="M1.500 16V7M9.500 16V9" stroke="#700010"/><path d="M3.500 14.500L7 7.500" stroke="#e848d0" stroke-width="2" shape-rendering="auto"/><path d="M6 15L8.500 10" stroke="#7010a0" stroke-width="1.500" shape-rendering="auto"/><path d="M3 1V6M5 2.500V6M7 1V6M3 1L5 3L7 1" stroke="#000" fill="none"/><path d="M10 1H15V6H10Z" fill="#000"/><rect x="11" y="2" width="1" height="1" fill="#fff"/><rect x="13" y="2" width="1" height="1" fill="#fff"/><rect x="12" y="4" width="1" height="1" fill="#fff"/><g shape-rendering="auto"><path d="M15 8.500Q12 5.500 10 8.500Q9.500 11 12.500 11.500Q15.500 12 14.500 14.500Q12.500 16.500 9.500 14.500" stroke="#000" stroke-width="3.600" fill="none"/><path d="M15 8.500Q12 5.500 10 8.500Q9.500 11 12.500 11.500Q15.500 12 14.500 14.500Q12.500 16.500 9.500 14.500" stroke="#f8f020" stroke-width="2" fill="none"/></g></svg><div style="position:absolute;left:294.5px;top:1004px;font-size:12px;line-height:14px;color:#000;white-space:pre;will-change:transform;transform:scaleX(0.88);transform-origin:0 0;">C:\j...</div><div class="rb" style="position:absolute;left:325px;top:1001px;width:50px;height:21px;"></div><svg style="position:absolute;left:329px;top:1003px" width="16" height="17" viewBox="0 0 16 17" shape-rendering="crispEdges" ><path d="M1.500 3.500V13.500H13.500V3.500H8L7 2.500H2.500Z" fill="#f4ec80" stroke="#806000"/><rect x="13" y="5" width="1.500" height="9" fill="#202020"/><circle cx="6.500" cy="7.500" r="3.200" fill="#90e8f0" stroke="#f0f0f0" stroke-width="1.200" shape-rendering="auto"/><path d="M9 10L14 15" stroke="#1848d0" stroke-width="2.600" shape-rendering="auto"/><path d="M9 11.500L13 15.500" stroke="#001060" stroke-width="1" shape-rendering="auto"/></svg><div style="position:absolute;left:347.5px;top:1004px;font-size:12px;line-height:14px;color:#000;white-space:pre;will-change:transform;transform:scaleX(0.88);transform-origin:0 0;">Ex...</div><div class="rb" style="position:absolute;left:378px;top:1001px;width:50px;height:21px;"></div><svg style="position:absolute;left:382px;top:1003px" width="16" height="17" viewBox="0 0 16 17" shape-rendering="crispEdges" ><rect x="1" y="6" width="9" height="10" fill="#d01020"/><path d="M1.500 16V7M9.500 16V9" stroke="#700010"/><path d="M3.500 14.500L7 7.500" stroke="#e848d0" stroke-width="2" shape-rendering="auto"/><path d="M6 15L8.500 10" stroke="#7010a0" stroke-width="1.500" shape-rendering="auto"/><path d="M3 1V6M5 2.500V6M7 1V6M3 1L5 3L7 1" stroke="#000" fill="none"/><path d="M10 1H15V6H10Z" fill="#000"/><rect x="11" y="2" width="1" height="1" fill="#fff"/><rect x="13" y="2" width="1" height="1" fill="#fff"/><rect x="12" y="4" width="1" height="1" fill="#fff"/><g shape-rendering="auto"><path d="M15 8.500Q12 5.500 10 8.500Q9.500 11 12.500 11.500Q15.500 12 14.500 14.500Q12.500 16.500 9.500 14.500" stroke="#000" stroke-width="3.600" fill="none"/><path d="M15 8.500Q12 5.500 10 8.500Q9.500 11 12.500 11.500Q15.500 12 14.500 14.500Q12.500 16.500 9.500 14.500" stroke="#f8f020" stroke-width="2" fill="none"/></g></svg><div style="position:absolute;left:400.5px;top:1004px;font-size:12px;line-height:14px;color:#000;white-space:pre;will-change:transform;transform:scaleX(0.88);transform-origin:0 0;">Cla...</div><div class="rb" style="position:absolute;left:431px;top:1001px;width:50px;height:21px;"></div><svg style="position:absolute;left:435px;top:1003px" width="16" height="17" viewBox="0 0 16 17" shape-rendering="crispEdges" ><rect x="1" y="6" width="9" height="10" fill="#d01020"/><path d="M1.500 16V7M9.500 16V9" stroke="#700010"/><path d="M3.500 14.500L7 7.500" stroke="#e848d0" stroke-width="2" shape-rendering="auto"/><path d="M6 15L8.500 10" stroke="#7010a0" stroke-width="1.500" shape-rendering="auto"/><path d="M3 1V6M5 2.500V6M7 1V6M3 1L5 3L7 1" stroke="#000" fill="none"/><path d="M10 1H15V6H10Z" fill="#000"/><rect x="11" y="2" width="1" height="1" fill="#fff"/><rect x="13" y="2" width="1" height="1" fill="#fff"/><rect x="12" y="4" width="1" height="1" fill="#fff"/><g shape-rendering="auto"><path d="M15 8.500Q12 5.500 10 8.500Q9.500 11 12.500 11.500Q15.500 12 14.500 14.500Q12.500 16.500 9.500 14.500" stroke="#000" stroke-width="3.600" fill="none"/><path d="M15 8.500Q12 5.500 10 8.500Q9.500 11 12.500 11.500Q15.500 12 14.500 14.500Q12.500 16.500 9.500 14.500" stroke="#f8f020" stroke-width="2" fill="none"/></g></svg><div style="position:absolute;left:453.5px;top:1004px;font-size:12px;line-height:14px;color:#000;white-space:pre;will-change:transform;transform:scaleX(0.88);transform-origin:0 0;">C:\...</div><div class="rb" style="position:absolute;left:484px;top:1001px;width:50px;height:21px;"></div><svg style="position:absolute;left:488px;top:1003px" width="16" height="17" viewBox="0 0 16 17" shape-rendering="crispEdges" ><rect x="0" y="0" width="16" height="17" fill="#fff"/><g shape-rendering="auto" fill="none"><path d="M5 1L4 2.500L6 3.500M8 0.500C9.500 2 6.500 3 8 4.500M11 1L12 2.500L10 3.500" stroke="#e02030" stroke-width="1.100"/><path d="M3 6.500H12.500V8C12.500 11 3 11 3 8Z" stroke="#181890" stroke-width="1.200"/><path d="M12.500 7H15V9L12 10" stroke="#181890" stroke-width="1.100"/><path d="M5.500 8.500H10" stroke="#181890"/><path d="M2 11.500C2 14 14 14 14 11.500M3.500 14.500C6 16 10 16 12.500 14.500" stroke="#181890" stroke-width="1.200"/></g></svg><div style="position:absolute;left:506.5px;top:1004px;font-size:12px;line-height:14px;color:#000;white-space:pre;will-change:transform;transform:scaleX(0.88);transform-origin:0 0;">JF...</div><div class="rb" style="position:absolute;left:537px;top:1001px;width:50px;height:21px;"></div><svg style="position:absolute;left:541px;top:1003px" width="16" height="17" viewBox="0 0 16 17" shape-rendering="crispEdges" ><rect x="0" y="0" width="16" height="17" fill="#fff"/><g shape-rendering="auto" fill="none"><path d="M5 1L4 2.500L6 3.500M8 0.500C9.500 2 6.500 3 8 4.500M11 1L12 2.500L10 3.500" stroke="#e02030" stroke-width="1.100"/><path d="M3 6.500H12.500V8C12.500 11 3 11 3 8Z" stroke="#181890" stroke-width="1.200"/><path d="M12.500 7H15V9L12 10" stroke="#181890" stroke-width="1.100"/><path d="M5.500 8.500H10" stroke="#181890"/><path d="M2 11.500C2 14 14 14 14 11.500M3.500 14.500C6 16 10 16 12.500 14.500" stroke="#181890" stroke-width="1.200"/></g></svg><div style="position:absolute;left:559.5px;top:1004px;font-size:12px;line-height:14px;color:#000;white-space:pre;will-change:transform;transform:scaleX(0.88);transform-origin:0 0;">JF...</div><div class="rb" style="position:absolute;left:590px;top:1001px;width:50px;height:21px;"></div><svg style="position:absolute;left:594px;top:1003px" width="16" height="17" viewBox="0 0 16 17" shape-rendering="crispEdges" ><rect x="1" y="6" width="9" height="10" fill="#d01020"/><path d="M1.500 16V7M9.500 16V9" stroke="#700010"/><path d="M3.500 14.500L7 7.500" stroke="#e848d0" stroke-width="2" shape-rendering="auto"/><path d="M6 15L8.500 10" stroke="#7010a0" stroke-width="1.500" shape-rendering="auto"/><path d="M3 1V6M5 2.500V6M7 1V6M3 1L5 3L7 1" stroke="#000" fill="none"/><path d="M10 1H15V6H10Z" fill="#000"/><rect x="11" y="2" width="1" height="1" fill="#fff"/><rect x="13" y="2" width="1" height="1" fill="#fff"/><rect x="12" y="4" width="1" height="1" fill="#fff"/><g shape-rendering="auto"><path d="M15 8.500Q12 5.500 10 8.500Q9.500 11 12.500 11.500Q15.500 12 14.500 14.500Q12.500 16.500 9.500 14.500" stroke="#000" stroke-width="3.600" fill="none"/><path d="M15 8.500Q12 5.500 10 8.500Q9.500 11 12.500 11.500Q15.500 12 14.500 14.500Q12.500 16.500 9.500 14.500" stroke="#f8f020" stroke-width="2" fill="none"/></g></svg><div style="position:absolute;left:612.5px;top:1004px;font-size:12px;line-height:14px;color:#000;white-space:pre;will-change:transform;transform:scaleX(0.88);transform-origin:0 0;">Co...</div><div class="rb" style="position:absolute;left:643px;top:1001px;width:50px;height:21px;"></div><svg style="position:absolute;left:647px;top:1003px" width="16" height="17" viewBox="0 0 16 17" shape-rendering="crispEdges" ><g shape-rendering="auto"><path d="M8 1L15 5.500V10L8 8Z" fill="#f01818"/><path d="M8 1L2 6L8 8L12 3.500Z" fill="#1020d8"/><path d="M2 6L1 10.500L4.500 12L8 8Z" fill="#f040e0"/><path d="M8 1L15 5.500V10M2 6L1 10.500L4 12.500" stroke="#000" fill="none" stroke-dasharray="1.500 1"/></g><text x="3.5" y="16" font-family="Liberation Sans" font-size="9.5" fill="#f8f020" font-weight="bold" stroke="#000" stroke-width="1.600" paint-order="stroke" textLength="12" lengthAdjust="spacingAndGlyphs">32</text></svg><div style="position:absolute;left:665.5px;top:1004px;font-size:12px;line-height:14px;color:#000;white-space:pre;will-change:transform;transform:scaleX(0.88);transform-origin:0 0;">So...</div><div class="rb" style="position:absolute;left:696px;top:1001px;width:50px;height:21px;"></div><svg style="position:absolute;left:700px;top:1003px" width="16" height="17" viewBox="0 0 16 17" shape-rendering="crispEdges" ><rect x="1" y="6" width="9" height="10" fill="#d01020"/><path d="M1.500 16V7M9.500 16V9" stroke="#700010"/><path d="M3.500 14.500L7 7.500" stroke="#e848d0" stroke-width="2" shape-rendering="auto"/><path d="M6 15L8.500 10" stroke="#7010a0" stroke-width="1.500" shape-rendering="auto"/><path d="M3 1V6M5 2.500V6M7 1V6M3 1L5 3L7 1" stroke="#000" fill="none"/><path d="M10 1H15V6H10Z" fill="#000"/><rect x="11" y="2" width="1" height="1" fill="#fff"/><rect x="13" y="2" width="1" height="1" fill="#fff"/><rect x="12" y="4" width="1" height="1" fill="#fff"/><g shape-rendering="auto"><path d="M15 8.500Q12 5.500 10 8.500Q9.500 11 12.500 11.500Q15.500 12 14.500 14.500Q12.500 16.500 9.500 14.500" stroke="#000" stroke-width="3.600" fill="none"/><path d="M15 8.500Q12 5.500 10 8.500Q9.500 11 12.500 11.500Q15.500 12 14.500 14.500Q12.500 16.500 9.500 14.500" stroke="#f8f020" stroke-width="2" fill="none"/></g></svg><div style="position:absolute;left:718.5px;top:1004px;font-size:12px;line-height:14px;color:#000;white-space:pre;will-change:transform;transform:scaleX(0.88);transform-origin:0 0;">C:\...</div><div class="rb" style="position:absolute;left:749px;top:1001px;width:50px;height:21px;"></div><svg style="position:absolute;left:753px;top:1003px" width="16" height="17" viewBox="0 0 16 17" shape-rendering="crispEdges" ><rect x="0" y="0" width="16" height="17" fill="#fff"/><g shape-rendering="auto" fill="none"><path d="M5 1L4 2.500L6 3.500M8 0.500C9.500 2 6.500 3 8 4.500M11 1L12 2.500L10 3.500" stroke="#e02030" stroke-width="1.100"/><path d="M3 6.500H12.500V8C12.500 11 3 11 3 8Z" stroke="#181890" stroke-width="1.200"/><path d="M12.500 7H15V9L12 10" stroke="#181890" stroke-width="1.100"/><path d="M5.500 8.500H10" stroke="#181890"/><path d="M2 11.500C2 14 14 14 14 11.500M3.500 14.500C6 16 10 16 12.500 14.500" stroke="#181890" stroke-width="1.200"/></g></svg><div style="position:absolute;left:771.5px;top:1004px;font-size:12px;line-height:14px;color:#000;white-space:pre;will-change:transform;transform:scaleX(0.88);transform-origin:0 0;">Inf...</div><div class="rb" style="position:absolute;left:802px;top:1001px;width:50px;height:21px;"></div><svg style="position:absolute;left:806px;top:1003px" width="16" height="17" viewBox="0 0 16 17" shape-rendering="crispEdges" ><g shape-rendering="auto"><ellipse cx="9" cy="9" rx="6.500" ry="4.500" fill="#f0a050" transform="rotate(20 9 9)"/><circle cx="7.500" cy="5" r="1.300" fill="#f0e020"/><circle cx="10.500" cy="5.500" r="1.300" fill="#30c030"/><circle cx="12.500" cy="7.500" r="1.200" fill="#e02020"/><path d="M3 2L14 10" stroke="#202080" stroke-width="1.800"/><path d="M3 1.500L10 7" stroke="#e03020" stroke-width="1"/><circle cx="14.500" cy="7" r="1" fill="#fff"/></g><text x="11" y="17" font-family="Liberation Sans" font-size="6" fill="#000" font-weight="bold" >6</text></svg><div style="position:absolute;left:824.5px;top:1004px;font-size:12px;line-height:14px;color:#000;white-space:pre;will-change:transform;transform:scaleX(0.88);transform-origin:0 0;">Jas...</div><div class="rb" style="position:absolute;left:855px;top:1001px;width:50px;height:21px;"></div><svg style="position:absolute;left:859px;top:1003px" width="16" height="17" viewBox="0 0 16 17" shape-rendering="crispEdges" ><rect x="1" y="6" width="9" height="10" fill="#d01020"/><path d="M1.500 16V7M9.500 16V9" stroke="#700010"/><path d="M3.500 14.500L7 7.500" stroke="#e848d0" stroke-width="2" shape-rendering="auto"/><path d="M6 15L8.500 10" stroke="#7010a0" stroke-width="1.500" shape-rendering="auto"/><path d="M3 1V6M5 2.500V6M7 1V6M3 1L5 3L7 1" stroke="#000" fill="none"/><path d="M10 1H15V6H10Z" fill="#000"/><rect x="11" y="2" width="1" height="1" fill="#fff"/><rect x="13" y="2" width="1" height="1" fill="#fff"/><rect x="12" y="4" width="1" height="1" fill="#fff"/><g shape-rendering="auto"><path d="M15 8.500Q12 5.500 10 8.500Q9.500 11 12.500 11.500Q15.500 12 14.500 14.500Q12.500 16.500 9.500 14.500" stroke="#000" stroke-width="3.600" fill="none"/><path d="M15 8.500Q12 5.500 10 8.500Q9.500 11 12.500 11.500Q15.500 12 14.500 14.500Q12.500 16.500 9.500 14.500" stroke="#f8f020" stroke-width="2" fill="none"/></g></svg><div style="position:absolute;left:877.5px;top:1004px;font-size:12px;line-height:14px;color:#000;white-space:pre;will-change:transform;transform:scaleX(0.88);transform-origin:0 0;">Co...</div><div class="rb" style="position:absolute;left:908px;top:1001px;width:50px;height:21px;"></div><svg style="position:absolute;left:912px;top:1003px" width="16" height="17" viewBox="0 0 16 17" shape-rendering="crispEdges" ><rect x="1" y="6" width="9" height="10" fill="#d01020"/><path d="M1.500 16V7M9.500 16V9" stroke="#700010"/><path d="M3.500 14.500L7 7.500" stroke="#e848d0" stroke-width="2" shape-rendering="auto"/><path d="M6 15L8.500 10" stroke="#7010a0" stroke-width="1.500" shape-rendering="auto"/><path d="M3 1V6M5 2.500V6M7 1V6M3 1L5 3L7 1" stroke="#000" fill="none"/><path d="M10 1H15V6H10Z" fill="#000"/><rect x="11" y="2" width="1" height="1" fill="#fff"/><rect x="13" y="2" width="1" height="1" fill="#fff"/><rect x="12" y="4" width="1" height="1" fill="#fff"/><g shape-rendering="auto"><path d="M15 8.500Q12 5.500 10 8.500Q9.500 11 12.500 11.500Q15.500 12 14.500 14.500Q12.500 16.500 9.500 14.500" stroke="#000" stroke-width="3.600" fill="none"/><path d="M15 8.500Q12 5.500 10 8.500Q9.500 11 12.500 11.500Q15.500 12 14.500 14.500Q12.500 16.500 9.500 14.500" stroke="#f8f020" stroke-width="2" fill="none"/></g></svg><div style="position:absolute;left:930.5px;top:1004px;font-size:12px;line-height:14px;color:#000;white-space:pre;will-change:transform;transform:scaleX(0.88);transform-origin:0 0;">C:\j...</div><div class="rb" style="position:absolute;left:961px;top:1001px;width:50px;height:21px;"></div><svg style="position:absolute;left:965px;top:1003px" width="16" height="17" viewBox="0 0 16 17" shape-rendering="crispEdges" ><rect x="1" y="6" width="9" height="10" fill="#d01020"/><path d="M1.500 16V7M9.500 16V9" stroke="#700010"/><path d="M3.500 14.500L7 7.500" stroke="#e848d0" stroke-width="2" shape-rendering="auto"/><path d="M6 15L8.500 10" stroke="#7010a0" stroke-width="1.500" shape-rendering="auto"/><path d="M3 1V6M5 2.500V6M7 1V6M3 1L5 3L7 1" stroke="#000" fill="none"/><path d="M10 1H15V6H10Z" fill="#000"/><rect x="11" y="2" width="1" height="1" fill="#fff"/><rect x="13" y="2" width="1" height="1" fill="#fff"/><rect x="12" y="4" width="1" height="1" fill="#fff"/><g shape-rendering="auto"><path d="M15 8.500Q12 5.500 10 8.500Q9.500 11 12.500 11.500Q15.500 12 14.500 14.500Q12.500 16.500 9.500 14.500" stroke="#000" stroke-width="3.600" fill="none"/><path d="M15 8.500Q12 5.500 10 8.500Q9.500 11 12.500 11.500Q15.500 12 14.500 14.500Q12.500 16.500 9.500 14.500" stroke="#f8f020" stroke-width="2" fill="none"/></g></svg><div style="position:absolute;left:983.5px;top:1004px;font-size:12px;line-height:14px;color:#000;white-space:pre;will-change:transform;transform:scaleX(0.88);transform-origin:0 0;">C:\...</div><div class="rb" style="position:absolute;left:1014px;top:1001px;width:50px;height:21px;"></div><svg style="position:absolute;left:1018px;top:1003px" width="16" height="17" viewBox="0 0 16 17" shape-rendering="crispEdges" ><rect x="0" y="0" width="16" height="17" fill="#fff"/><g shape-rendering="auto" fill="none"><path d="M5 1L4 2.500L6 3.500M8 0.500C9.500 2 6.500 3 8 4.500M11 1L12 2.500L10 3.500" stroke="#e02030" stroke-width="1.100"/><path d="M3 6.500H12.500V8C12.500 11 3 11 3 8Z" stroke="#181890" stroke-width="1.200"/><path d="M12.500 7H15V9L12 10" stroke="#181890" stroke-width="1.100"/><path d="M5.500 8.500H10" stroke="#181890"/><path d="M2 11.500C2 14 14 14 14 11.500M3.500 14.500C6 16 10 16 12.500 14.500" stroke="#181890" stroke-width="1.200"/></g></svg><div style="position:absolute;left:1036.5px;top:1004px;font-size:12px;line-height:14px;color:#000;white-space:pre;will-change:transform;transform:scaleX(0.88);transform-origin:0 0;">Ag...</div><div class="pb" style="position:absolute;left:1067px;top:1001px;width:50px;height:21px;background:#c4d0e4"></div><svg style="position:absolute;left:1071px;top:1003px" width="16" height="17" viewBox="0 0 16 17" shape-rendering="crispEdges" ><rect x="0" y="0" width="16" height="17" fill="#fff"/><rect x="4" y="1" width="9" height="6" fill="#e04070"/><path d="M5 2.500h7M5 4.500h7" stroke="#fff" stroke-dasharray="1 1"/><rect x="4" y="1" width="9" height="1" fill="#7050b0"/><rect x="4" y="8.500" width="10" height="1.500" fill="#606858"/><rect x="3" y="11" width="11" height="2" fill="#b0b4a8"/><path d="M3.500 10V15.500H13.500V10" stroke="#707868" fill="none"/><rect x="3" y="15" width="11" height="1" fill="#606858"/></svg><div style="position:absolute;left:1089.5px;top:1004px;font-size:12px;line-height:14px;color:#000;white-space:pre;will-change:transform;font-weight:bold;transform:scaleX(0.95);transform-origin:0 0;">D...</div><div class="sk" style="position:absolute;left:1130px;top:1001px;width:149px;height:21px;"></div><svg style="position:absolute;left:1130px;top:1003px" width="88" height="17" viewBox="0 0 88 17" shape-rendering="crispEdges" ><path d="M3 6.500H6L10 2V15L6 10.500H3Z" fill="#f0e040" stroke="#000" shape-rendering="auto"/><path d="M12 5Q14 8.500 12 12" stroke="#000" fill="none" shape-rendering="auto"/><rect x="20" y="5" width="14" height="8" fill="#20a040" stroke="#004000"/><rect x="22" y="7" width="4" height="3" fill="#f0e040"/><rect x="27" y="11" width="7" height="3" fill="#f0e040" stroke="#000" stroke-width=".5"/><path d="M22 13v2M25 13v2M28 13v2" stroke="#000"/><rect x="36.500" y="1.500" width="14" height="14" fill="#a8e8f0" stroke="#000"/><path d="M40 3V14M46 3V14" stroke="#000"/><rect x="38.500" y="5" width="3" height="2" fill="#000"/><rect x="44.500" y="4" width="3" height="3" fill="#e02020"/><rect x="44.500" y="7" width="3" height="3" fill="#f0e020"/><rect x="44.500" y="10" width="3" height="3" fill="#20c020"/><path d="M53 6Q53 2 60 2Q67 2 67 6Q67 10 61 10L58 14V10Q53 10 53 6Z" fill="#1030e0" shape-rendering="auto"/><path d="M59 3.500L63 6L59 8.500Z" fill="#fff" shape-rendering="auto"/><g transform="translate(80,8.500)" shape-rendering="auto"><g fill="#30c030" stroke="#003000" stroke-width=".6"><ellipse cx="0" cy="-4.500" rx="2" ry="3" transform="rotate(0)"/><ellipse cx="0" cy="-4.500" rx="2" ry="3" transform="rotate(45)"/><ellipse cx="0" cy="-4.500" rx="2" ry="3" transform="rotate(90)"/><ellipse cx="0" cy="-4.500" rx="2" ry="3" transform="rotate(135)"/><ellipse cx="0" cy="-4.500" rx="2" ry="3" transform="rotate(180)"/><ellipse cx="0" cy="-4.500" rx="2" ry="3" transform="rotate(225)"/><ellipse cx="0" cy="-4.500" rx="2" ry="3" transform="rotate(270)"/><ellipse cx="0" cy="-4.500" rx="2" ry="3" transform="rotate(315)"/></g><circle r="2.200" fill="#f0f040"/></g></svg><div style="position:absolute;left:1227.5px;top:1004px;font-size:12px;line-height:14px;color:#000;white-space:pre;will-change:transform;transform:scaleX(0.88);transform-origin:0 0;">5:20 PM</div></body></html>
